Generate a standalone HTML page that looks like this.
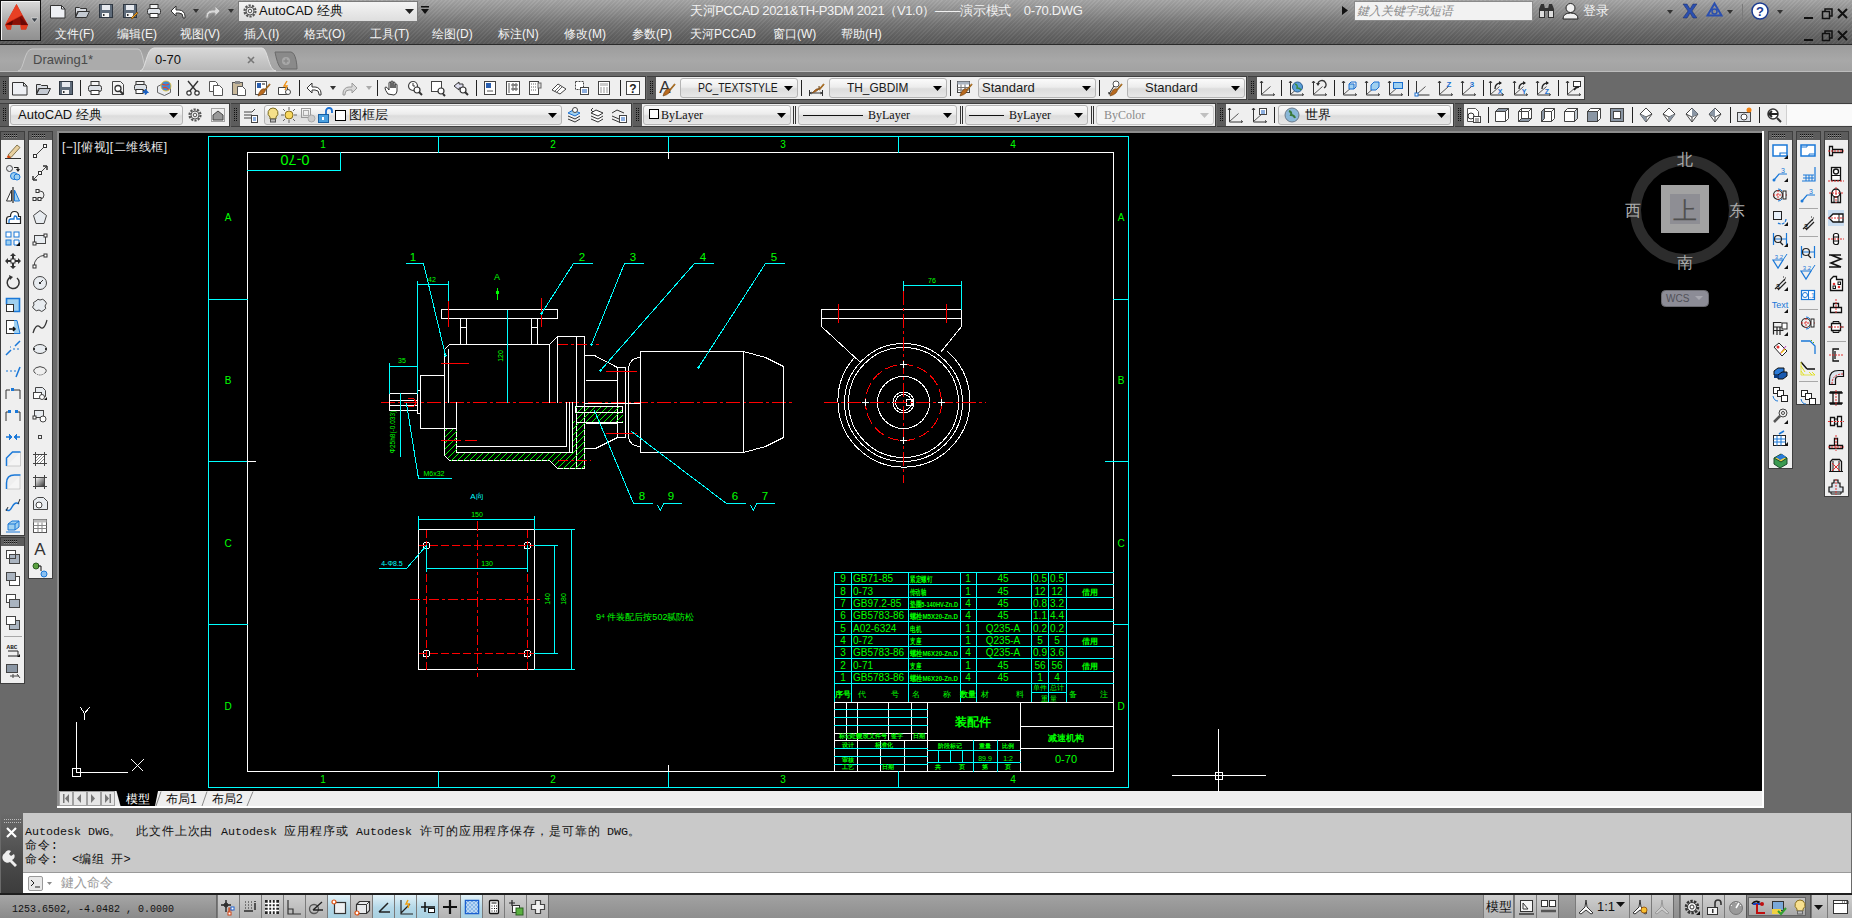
<!DOCTYPE html><html><head><meta charset="utf-8"><style>
*{margin:0;padding:0;box-sizing:border-box}
html,body{width:1852px;height:918px;overflow:hidden;background:#6a6a6a;font-family:"Liberation Sans",sans-serif;}
.a{position:absolute}
svg{position:absolute;overflow:visible}
.t{position:absolute;white-space:nowrap}
</style></head><body>
<div class="a" style="left:0;top:0;width:1852px;height:44px;background:linear-gradient(#a6a6a6 0px,#8e8e8e 12px,#747474 24px,#626262 36px,#595959 44px)"></div>
<div class="a" style="left:0;top:0;width:1852px;height:44px;background:repeating-linear-gradient(135deg,rgba(255,255,255,0.05) 0px,rgba(255,255,255,0.05) 1px,rgba(0,0,0,0.03) 1.5px,rgba(0,0,0,0.03) 3px)"></div>
<div class="a" style="left:0;top:44px;width:1852px;height:1px;background:#2a2a2a"></div>
<div class="a" style="left:0;top:0;width:41px;height:41px;background:linear-gradient(#dadada,#a4a4a4 60%,#909090);border:1px solid #111;box-shadow:inset 1px 1px 0 #f4f4f4"></div>
<svg style="left:0;top:0" width="41" height="41" viewBox="0 0 41 41"><path d="M16.5,4 L28,25 L26,29.5 L21,29.5 L20.5,25 L11.5,25 L11,29.5 L7,29.5 L5,25 Z" fill="#d42a14"/><path d="M16.5,4 L22,15 L6,23 Z" fill="#e84024"/><path d="M5.5,24.5 L22,15.5 L28,25 Z" fill="#8a1008"/><path d="M5.5,24.5 L13,20.5 L12,25 Z" fill="#5a0604"/><path d="M20,17 L28,25 L21,25z" fill="#6a0806"/><path d="M7,25.5h4.5l-0.5,4h-3.5z M20.5,25.5h7l-1.5,4h-5z" fill="#e03a1c"/><path d="M31,18h7l-3.5,4.5z" fill="#3a4048" stroke="#e8e8e8" stroke-width=".6"/></svg>
<svg style="left:50px;top:3px" width="16" height="16" viewBox="0 0 16 16"><path d="M0.5,2.5h11l3.5,3.5v9h-14.5z" fill="#eef0f4" stroke="#333" stroke-linejoin="round"/><path d="M11.5,2.5v3.5h3.5" fill="none" stroke="#333"/></svg>
<svg style="left:74px;top:3px" width="16" height="16" viewBox="0 0 16 16"><path d="M1.5,4.5h4l1,1h6v3h-9l-2,6z" fill="#d8dce2" stroke="#333"/><path d="M1.5,14.5l3-6h11l-3,6z" fill="#c4cad2" stroke="#333"/></svg>
<svg style="left:98px;top:3px" width="16" height="16" viewBox="0 0 16 16"><rect x="1.5" y="1.5" width="13" height="13" fill="#5e6b7a" stroke="#2e3640"/><rect x="4" y="2" width="8" height="5" fill="#e6e9ee"/><rect x="4" y="10" width="7" height="4" fill="#f4f4f4"/><rect x="5" y="11" width="1.5" height="2" fill="#333"/></svg>
<svg style="left:122px;top:3px" width="16" height="16" viewBox="0 0 16 16"><rect x="1.5" y="1.5" width="13" height="13" fill="#5e6b7a" stroke="#2e3640"/><rect x="4" y="2" width="8" height="5" fill="#e6e9ee"/><rect x="4" y="10" width="7" height="4" fill="#f4f4f4"/><rect x="5" y="11" width="1.5" height="2" fill="#333"/><path d="M9,15l6-6 1,1-6,6z" fill="#f0a020" stroke="#6a3a00" stroke-width=".6"/></svg>
<svg style="left:146px;top:3px" width="16" height="16" viewBox="0 0 16 16"><rect x="4" y="1.5" width="8" height="4" fill="#f4f4f4" stroke="#333"/><rect x="1.5" y="5.5" width="13" height="6" rx="2" fill="#dde1e6" stroke="#333"/><rect x="4" y="10.5" width="8" height="4" fill="#fff" stroke="#333"/></svg>
<svg style="left:170px;top:3px" width="16" height="16" viewBox="0 0 16 16"><path d="M6,3l-5,5 5,5v-3h3a4,4 0 0 1 4,4v1h2v-2a6,6 0 0 0 -6,-6h-3z" fill="#fff" stroke="#333"/></svg>
<svg style="left:205px;top:3px" width="16" height="16" viewBox="0 0 16 16"><path d="M10,3l5,5-5,5v-3h-3a4,4 0 0 0 -4,4v1h-2v-2a6,6 0 0 1 6,-6h3z" fill="#d8d8d8" stroke="#9a9a9a"/></svg>
<svg style="left:193px;top:9px" width="6" height="4"><path d="M0,0h6l-3,4z" fill="#333"/></svg>
<svg style="left:228px;top:9px" width="6" height="4"><path d="M0,0h6l-3,4z" fill="#333"/></svg>
<div class="a" style="left:238px;top:1px;width:180px;height:21px;background:linear-gradient(#f4f4f4,#dedede);border:1px solid #7a7a7a"></div>
<svg style="left:242px;top:3px" width="16" height="16" viewBox="0 0 16 16"><circle cx="8" cy="8" r="5.5" fill="none" stroke="#555" stroke-width="2.2" stroke-dasharray="2.2,1.2"/><circle cx="8" cy="8" r="4" fill="#eee" stroke="#555"/><circle cx="8" cy="8" r="1.8" fill="none" stroke="#555"/></svg>
<div class="t" style="left:259px;top:3px;font-size:13px;color:#111;line-height:16px">AutoCAD 经典</div>
<svg style="left:405px;top:9px" width="9" height="5"><path d="M0,0h9l-4.5,5z" fill="#222"/></svg>
<svg style="left:421px;top:6px" width="8" height="9"><path d="M0,0h8v1.5h-8zM0,3h8l-4,5z" fill="#111"/></svg>
<div class="t" style="left:690px;top:3px;font-size:13px;color:#f2f2f2;line-height:16px;letter-spacing:-0.35px">天河PCCAD 2021&amp;TH-P3DM 2021（V1.0）——演示模式&nbsp;&nbsp;&nbsp;&nbsp;0-70.DWG</div>
<svg style="left:1342px;top:6px" width="6" height="9"><path d="M0,0l6,4.5-6,4.5z" fill="#111"/></svg>
<div class="a" style="left:1354px;top:1px;width:179px;height:20px;background:#f2f2f2;border:1px solid #8a8a8a"></div>
<div class="t" style="left:1357px;top:3px;font-size:12px;color:#8a8a8a;font-style:italic;line-height:16px">鍵入关键字或短语</div>
<svg style="left:1538px;top:3px" width="17" height="16" viewBox="0 0 17 16"><path d="M1,6l2-5h3l1,5v9h-6z M10,6l1-5h3l2,5v9h-6z" fill="#333"/><rect x="2" y="8" width="4" height="6" fill="#ddd"/><rect x="11" y="8" width="4" height="6" fill="#ddd"/><rect x="6" y="5" width="5" height="3" fill="#333"/></svg>
<svg style="left:1562px;top:2px" width="17" height="18" viewBox="0 0 17 18"><circle cx="8.5" cy="6" r="4.5" fill="#f0f0f0" stroke="#222"/><path d="M1,17q0-6 7.5-6t7.5,6z" fill="#f0f0f0" stroke="#222"/></svg>
<div class="t" style="left:1583px;top:3px;font-size:13px;color:#f2f2f2;line-height:16px">登录</div>
<svg style="left:1667px;top:10px" width="6" height="4"><path d="M0,0h6l-3,4z" fill="#333"/></svg>
<svg style="left:1727px;top:10px" width="6" height="4"><path d="M0,0h6l-3,4z" fill="#333"/></svg>
<svg style="left:1777px;top:10px" width="6" height="4"><path d="M0,0h6l-3,4z" fill="#333"/></svg>
<svg style="left:1682px;top:3px" width="16" height="16" viewBox="0 0 16 16"><path d="M1,1h4l3,5 3-5h4l-5,7 5,7h-4l-3-5-3,5h-4l5-7z" fill="#2a4fb0" stroke="#1a2a60" stroke-width=".5"/></svg>
<svg style="left:1706px;top:2px" width="17" height="16" viewBox="0 0 17 16"><path d="M8.5,1.5l7,12h-14z" fill="none" stroke="#2a4fb0" stroke-width="2"/><circle cx="8.5" cy="9.5" r="2.5" fill="none" stroke="#2a4fb0" stroke-width="1.5"/></svg>
<div class="a" style="left:1742px;top:4px;width:1px;height:16px;background:#7a7a7a"></div>
<svg style="left:1751px;top:2px" width="18" height="18" viewBox="0 0 18 18"><circle cx="9" cy="9" r="8" fill="#fff" stroke="#1a3a90" stroke-width="1.5"/><text x="9" y="14" font-size="13" font-weight="bold" text-anchor="middle" fill="#1a3a90" font-family="Liberation Sans">?</text></svg>
<svg style="left:1803px;top:8px" width="46" height="12" viewBox="0 0 46 12"><rect x="1" y="9" width="9" height="2" fill="#111"/><rect x="19.5" y="3.5" width="7" height="7" fill="none" stroke="#111" stroke-width="1.5"/><path d="M22,3.5v-2.5h7v7h-2.5" fill="none" stroke="#111" stroke-width="1.5"/><path d="M35,1l9,9M44,1l-9,9" stroke="#111" stroke-width="2"/></svg>
<svg style="left:1803px;top:30px" width="46" height="12" viewBox="0 0 46 12"><rect x="1" y="9" width="9" height="2" fill="#111"/><rect x="19.5" y="3.5" width="7" height="7" fill="none" stroke="#111" stroke-width="1.5"/><path d="M22,3.5v-2.5h7v7h-2.5" fill="none" stroke="#111" stroke-width="1.5"/><path d="M35,1l9,9M44,1l-9,9" stroke="#111" stroke-width="2"/></svg>
<div class="t" style="left:55px;top:27px;font-size:12px;color:#f4f4f4;line-height:14px">文件(F)</div>
<div class="t" style="left:117px;top:27px;font-size:12px;color:#f4f4f4;line-height:14px">编辑(E)</div>
<div class="t" style="left:180px;top:27px;font-size:12px;color:#f4f4f4;line-height:14px">视图(V)</div>
<div class="t" style="left:244px;top:27px;font-size:12px;color:#f4f4f4;line-height:14px">插入(I)</div>
<div class="t" style="left:304px;top:27px;font-size:12px;color:#f4f4f4;line-height:14px">格式(O)</div>
<div class="t" style="left:370px;top:27px;font-size:12px;color:#f4f4f4;line-height:14px">工具(T)</div>
<div class="t" style="left:432px;top:27px;font-size:12px;color:#f4f4f4;line-height:14px">绘图(D)</div>
<div class="t" style="left:498px;top:27px;font-size:12px;color:#f4f4f4;line-height:14px">标注(N)</div>
<div class="t" style="left:564px;top:27px;font-size:12px;color:#f4f4f4;line-height:14px">修改(M)</div>
<div class="t" style="left:632px;top:27px;font-size:12px;color:#f4f4f4;line-height:14px">参数(P)</div>
<div class="t" style="left:690px;top:27px;font-size:12px;color:#f4f4f4;line-height:14px">天河PCCAD</div>
<div class="t" style="left:773px;top:27px;font-size:12px;color:#f4f4f4;line-height:14px">窗口(W)</div>
<div class="t" style="left:841px;top:27px;font-size:12px;color:#f4f4f4;line-height:14px">帮助(H)</div>
<div class="a" style="left:0;top:45px;width:1852px;height:27px;background:linear-gradient(#9c9c9c,#a8a8a8 60%,#a2a2a2);border-bottom:1px solid #bcbcbc"></div>
<div class="a" style="left:0;top:72px;width:1852px;height:4px;background:#6a6a6a"></div>
<svg style="left:0;top:45px" width="310" height="27" viewBox="0 0 310 27"><path d="M18,26 C24,26 24,4 32,4 L138,4 C144,4 142,26 150,26 Z" fill="#ababab" stroke="#c8c8c8"/><path d="M140,26 C146,26 146,3 154,3 L262,3 C268,3 268,26 276,26 Z" fill="url(#tabg)" stroke="#e0e0e0"/><defs><linearGradient id="tabg" x1="0" y1="0" x2="0" y2="1"><stop offset="0" stop-color="#d8d8d8"/><stop offset="1" stop-color="#b8b8b8"/></linearGradient></defs><path d="M275,7 L291,7 C296,8 297,20 297,24 L282,24 C278,22 276,12 275,7z" fill="#8a8a8a" stroke="#6a6a6a"/><circle cx="286" cy="16" r="4" fill="#a8a8a8"/><path d="M286,13.5v5M283.5,16h5" stroke="#8a8a8a" stroke-width="1.5"/><path d="M248,12l6,6M254,12l-6,6" stroke="#777" stroke-width="1.6"/></svg>
<div class="t" style="left:33px;top:52px;font-size:13px;color:#4a4a4a;line-height:16px">Drawing1*</div>
<div class="t" style="left:155px;top:52px;font-size:13px;color:#111;line-height:16px">0-70</div>
<div class="a" style="left:0px;top:76px;width:646px;height:24px;background:#efefef;border:1px solid #3e3e3e"></div>
<div class="a" style="left:0px;top:77px;width:9px;height:22px;background:#5c5c5c"></div>
<svg style="left:0px;top:77px" width="9" height="22" fill="#111"><rect x="3" y="4" width="1" height="1"/><rect x="3" y="6" width="1" height="1"/><rect x="3" y="8" width="1" height="1"/><rect x="3" y="10" width="1" height="1"/><rect x="3" y="12" width="1" height="1"/><rect x="3" y="14" width="1" height="1"/><rect x="3" y="16" width="1" height="1"/><rect x="5" y="4" width="1" height="1"/><rect x="5" y="6" width="1" height="1"/><rect x="5" y="8" width="1" height="1"/><rect x="5" y="10" width="1" height="1"/><rect x="5" y="12" width="1" height="1"/><rect x="5" y="14" width="1" height="1"/><rect x="5" y="16" width="1" height="1"/></svg>
<svg style="left:12px;top:80px" width="16" height="16" viewBox="0 0 16 16"><path d="M0.5,2.5h11l3.5,3.5v9h-14.5z" fill="#eef0f4" stroke="#333" stroke-linejoin="round"/><path d="M11.5,2.5v3.5h3.5" fill="none" stroke="#333"/></svg>
<svg style="left:35px;top:80px" width="16" height="16" viewBox="0 0 16 16"><path d="M1.5,4.5h4l1,1h6v3h-9l-2,6z" fill="#d8dce2" stroke="#333"/><path d="M1.5,14.5l3-6h11l-3,6z" fill="#c4cad2" stroke="#333"/></svg>
<svg style="left:58px;top:80px" width="16" height="16" viewBox="0 0 16 16"><rect x="1.5" y="1.5" width="13" height="13" fill="#5e6b7a" stroke="#2e3640"/><rect x="4" y="2" width="8" height="5" fill="#e6e9ee"/><rect x="4" y="10" width="7" height="4" fill="#f4f4f4"/><rect x="5" y="11" width="1.5" height="2" fill="#333"/></svg>
<svg style="left:87px;top:80px" width="16" height="16" viewBox="0 0 16 16"><rect x="4" y="1.5" width="8" height="4" fill="#f4f4f4" stroke="#333"/><rect x="1.5" y="5.5" width="13" height="6" rx="2" fill="#dde1e6" stroke="#333"/><rect x="4" y="10.5" width="8" height="4" fill="#fff" stroke="#333"/></svg>
<svg style="left:110px;top:80px" width="16" height="16" viewBox="0 0 16 16"><path d="M2.5,1.5h8l3,3v10h-11z" fill="#f4f4f4" stroke="#444"/><circle cx="8" cy="8.5" r="3" fill="#fff" stroke="#333" stroke-width="1.3"/><path d="M10,11l3.5,3.5" stroke="#333" stroke-width="2"/></svg>
<svg style="left:133px;top:80px" width="16" height="16" viewBox="0 0 16 16"><rect x="3" y="1.5" width="8" height="3" fill="#f4f4f4" stroke="#333"/><rect x="1.5" y="4.5" width="12" height="6" rx="2" fill="#dde1e6" stroke="#333"/><rect x="3" y="9.5" width="7" height="4" fill="#fff" stroke="#333"/><path d="M10,12h4l-2,-2.5M14,12l-2,2.5" stroke="#1a5fc0" stroke-width="2" fill="none"/></svg>
<svg style="left:156px;top:80px" width="16" height="16" viewBox="0 0 16 16"><path d="M1.5,6.5l6-3 7,3v6l-6,3-7-3z" fill="#e8eaee" stroke="#666"/><circle cx="10" cy="6" r="5" fill="#3a8ad8"/><path d="M6,4q4,2 7,0M7,8q3,-2 6,2" stroke="#f04020" stroke-width="1.2" fill="none"/><circle cx="10" cy="6" r="5" fill="none" stroke="#f0c020" stroke-width=".8"/></svg>
<svg style="left:185px;top:80px" width="16" height="16" viewBox="0 0 16 16"><path d="M3,1l9,11M13,1l-9,11" stroke="#333" stroke-width="1.4"/><circle cx="4" cy="13" r="2.2" fill="#fff" stroke="#333" stroke-width="1.2"/><circle cx="12" cy="13" r="2.2" fill="#fff" stroke="#333" stroke-width="1.2"/></svg>
<svg style="left:208px;top:80px" width="16" height="16" viewBox="0 0 16 16"><path d="M1.5,1.5h6l2,2v8h-8z" fill="#fff" stroke="#555"/><path d="M5.5,5.5h6l3,3v7h-9z" fill="#fff" stroke="#555"/></svg>
<svg style="left:231px;top:80px" width="16" height="16" viewBox="0 0 16 16"><rect x="1.5" y="2.5" width="10" height="12" fill="#c8b89a" stroke="#555"/><rect x="4" y="1" width="5" height="3" fill="#888"/><path d="M6.5,6.5h5l3,3v6h-8z" fill="#fff" stroke="#555"/></svg>
<svg style="left:254px;top:80px" width="16" height="16" viewBox="0 0 16 16"><rect x="1.5" y="1.5" width="11" height="13" fill="#fff" stroke="#555"/><rect x="3" y="3" width="4" height="5" fill="#2a5fb0"/><rect x="8" y="3" width="3" height="2" fill="#888"/><path d="M16,4l-5,6" stroke="#7a4a10" stroke-width="1.6"/><path d="M16,4l-5,6" stroke="#f0a030" stroke-width=".6"/><path d="M11,9q-2-1-4,1-2,2-3,6 4-1 6-3 2-2 1-4z" fill="#b86a20" stroke="#6a3a08" stroke-width=".6"/></svg>
<svg style="left:277px;top:80px" width="16" height="16" viewBox="0 0 16 16"><path d="M1.5,7.5h9v7h-9z" fill="#fff" stroke="#444"/><circle cx="11" cy="12" r="2.5" fill="#fff" stroke="#444"/><path d="M10,1l-3,5h3l-2,4" stroke="#f09010" stroke-width="1.4" fill="none"/></svg>
<svg style="left:306px;top:80px" width="16" height="16" viewBox="0 0 16 16"><path d="M6,3l-5,5 5,5v-3h3a4,4 0 0 1 4,4v1h2v-2a6,6 0 0 0 -6,-6h-3z" fill="#fff" stroke="#333"/></svg>
<svg style="left:342px;top:80px" width="16" height="16" viewBox="0 0 16 16"><path d="M10,3l5,5-5,5v-3h-3a4,4 0 0 0 -4,4v1h-2v-2a6,6 0 0 1 6,-6h3z" fill="#d8d8d8" stroke="#9a9a9a"/></svg>
<svg style="left:384px;top:80px" width="16" height="16" viewBox="0 0 16 16"><path d="M4,14q-3-4-3-6 0-1 1-1 1,0 3,3v-7q0-1 1-1 1,0 1,1v5v-6q0-1 1-1 1,0 1,1v6v-5q0-1 1-1 1,0 1,1v5v-3q0-1 1-1 1,0 1,1v6q0,3-3,4z" fill="#fff" stroke="#333"/></svg>
<svg style="left:407px;top:80px" width="16" height="16" viewBox="0 0 16 16"><circle cx="6" cy="6" r="4.5" fill="#fff" stroke="#444" stroke-width="1.2"/><path d="M6,3v3h2" stroke="#333" fill="none"/><circle cx="10" cy="10" r="3" fill="#fff" stroke="#333" stroke-width="1.2"/><path d="M12,12l3,3" stroke="#333" stroke-width="2"/></svg>
<svg style="left:430px;top:80px" width="16" height="16" viewBox="0 0 16 16"><rect x="1.5" y="1.5" width="10" height="10" fill="#fff" stroke="#444"/><circle cx="11" cy="11" r="3" fill="#fff" stroke="#333" stroke-width="1.2"/><path d="M13,14l2,2" stroke="#333" stroke-width="2"/></svg>
<svg style="left:453px;top:80px" width="16" height="16" viewBox="0 0 16 16"><path d="M6,2l-5,4 5,4v-2h4v-4h-4z" fill="#dde" stroke="#333"/><circle cx="10" cy="10" r="3" fill="#fff" stroke="#333" stroke-width="1.2"/><path d="M12,12l3,3" stroke="#333" stroke-width="2"/></svg>
<svg style="left:482px;top:80px" width="16" height="16" viewBox="0 0 16 16"><rect x="2.5" y="1.5" width="11" height="13" fill="#fff" stroke="#444"/><rect x="4" y="3" width="5" height="5" fill="#2a5fb0"/><path d="M5,11h6" stroke="#555"/></svg>
<svg style="left:505px;top:80px" width="16" height="16" viewBox="0 0 16 16"><rect x="1.5" y="1.5" width="13" height="13" fill="#fff" stroke="#444"/><path d="M4,3v10M7,4h2v2h-2zM10,4h2v2h-2zM7,8h2v2h-2zM10,8h2v2h-2z" stroke="#555" fill="none"/></svg>
<svg style="left:527px;top:80px" width="16" height="16" viewBox="0 0 16 16"><rect x="2.5" y="1.5" width="9" height="13" fill="#fff" stroke="#444"/><path d="M4,4h5M4,7h5M4,10h5" stroke="#666" stroke-dasharray="1,1"/><rect x="11" y="3" width="3" height="5" fill="#ddd" stroke="#666"/></svg>
<svg style="left:551px;top:80px" width="16" height="16" viewBox="0 0 16 16"><path d="M1,10l6-6 8,5-6,5z" fill="#fff" stroke="#444"/><path d="M3,12l6-6M5,13l6-6" stroke="#666"/></svg>
<svg style="left:574px;top:80px" width="16" height="16" viewBox="0 0 16 16"><rect x="1.5" y="1.5" width="8" height="8" fill="#fff" stroke="#444" stroke-dasharray="2,1"/><rect x="6.5" y="7.5" width="8" height="7" fill="#fff" stroke="#444"/><path d="M8,10h5M8,12h5" stroke="#1a5fc0"/></svg>
<svg style="left:596px;top:80px" width="16" height="16" viewBox="0 0 16 16"><rect x="2.5" y="1.5" width="11" height="13" fill="#fff" stroke="#444"/><rect x="4" y="3" width="8" height="3" fill="#ccc"/><path d="M4.5,8h1M7.5,8h1M10.5,8h1M4.5,10h1M7.5,10h1M10.5,10h1M4.5,12h1M7.5,12h1M10.5,12h1" stroke="#333"/></svg>
<svg style="left:625px;top:80px" width="16" height="16" viewBox="0 0 16 16"><rect x="1.5" y="1.5" width="13" height="13" fill="#fff" stroke="#444"/><text x="8" y="13" font-size="12" font-weight="bold" text-anchor="middle" font-family="Liberation Sans" fill="#222">?</text></svg>
<div class="a" style="left:80px;top:80px;width:1px;height:16px;background:#222"></div>
<div class="a" style="left:178px;top:80px;width:1px;height:16px;background:#222"></div>
<div class="a" style="left:299px;top:80px;width:1px;height:16px;background:#222"></div>
<div class="a" style="left:377px;top:80px;width:1px;height:16px;background:#222"></div>
<div class="a" style="left:476px;top:80px;width:1px;height:16px;background:#222"></div>
<div class="a" style="left:620px;top:80px;width:1px;height:16px;background:#222"></div>
<svg style="left:330px;top:86px" width="6" height="4"><path d="M0,0h6l-3,4z" fill="#333"/></svg>
<svg style="left:366px;top:86px" width="6" height="4"><path d="M0,0h6l-3,4z" fill="#aaa"/></svg>
<div class="a" style="left:647px;top:76px;width:600px;height:24px;background:#efefef;border:1px solid #3e3e3e"></div>
<div class="a" style="left:647px;top:77px;width:9px;height:22px;background:#5c5c5c"></div>
<svg style="left:647px;top:77px" width="9" height="22" fill="#111"><rect x="3" y="4" width="1" height="1"/><rect x="3" y="6" width="1" height="1"/><rect x="3" y="8" width="1" height="1"/><rect x="3" y="10" width="1" height="1"/><rect x="3" y="12" width="1" height="1"/><rect x="3" y="14" width="1" height="1"/><rect x="3" y="16" width="1" height="1"/><rect x="5" y="4" width="1" height="1"/><rect x="5" y="6" width="1" height="1"/><rect x="5" y="8" width="1" height="1"/><rect x="5" y="10" width="1" height="1"/><rect x="5" y="12" width="1" height="1"/><rect x="5" y="14" width="1" height="1"/><rect x="5" y="16" width="1" height="1"/></svg>
<svg style="left:659px;top:80px" width="16" height="16" viewBox="0 0 16 16"><text x="6" y="13" font-size="17" font-family="Liberation Sans" fill="#333" text-anchor="middle">A</text><path d="M16,4l-5,6" stroke="#7a4a10" stroke-width="1.6"/><path d="M16,4l-5,6" stroke="#f0a030" stroke-width=".6"/><path d="M11,9q-2-1-4,1-2,2-3,6 4-1 6-3 2-2 1-4z" fill="#b86a20" stroke="#6a3a08" stroke-width=".6"/></svg>
<div class="a" style="left:680px;top:78px;width:118px;height:20px;background:linear-gradient(#fbfbfb,#ececec 45%,#dcdcdc 55%,#e8e8e8);border:1px solid #b4b4b4;border-radius:3px;overflow:hidden"></div>
<div class="t" style="left:698px;top:80px;font-size:13px;color:#1a1a1a;line-height:16px;transform:scaleX(0.80);transform-origin:0 0">PC_TEXTSTYLE</div>
<svg style="left:784px;top:86px" width="9" height="5"><path d="M0,0h9l-4.5,5z" fill="#000"/></svg>
<div class="a" style="left:801px;top:80px;width:1px;height:16px;background:#222"></div>
<svg style="left:808px;top:80px" width="16" height="16" viewBox="0 0 16 16"><path d="M1.5,10v6M14.5,10v6M1.5,13h13" stroke="#333" fill="none"/><path d="M1.5,13l2-1.5v3zM14.5,13l-2-1.5v3z" fill="#333"/><path d="M16,4l-5,6" stroke="#7a4a10" stroke-width="1.6"/><path d="M16,4l-5,6" stroke="#f0a030" stroke-width=".6"/><path d="M11,9q-2-1-4,1-2,2-3,3 4-1 6-3 2-2 1-4z" fill="#b86a20" stroke="#6a3a08" stroke-width=".6"/></svg>
<div class="a" style="left:829px;top:78px;width:118px;height:20px;background:linear-gradient(#fbfbfb,#ececec 45%,#dcdcdc 55%,#e8e8e8);border:1px solid #b4b4b4;border-radius:3px;overflow:hidden"></div>
<div class="t" style="left:847px;top:80px;font-size:13px;color:#1a1a1a;line-height:16px;transform:scaleX(0.915);transform-origin:0 0">TH_GBDIM</div>
<svg style="left:933px;top:86px" width="9" height="5"><path d="M0,0h9l-4.5,5z" fill="#000"/></svg>
<div class="a" style="left:950px;top:80px;width:1px;height:16px;background:#222"></div>
<svg style="left:956px;top:80px" width="16" height="16" viewBox="0 0 16 16"><rect x="1.5" y="1.5" width="12" height="11" fill="#fff" stroke="#444"/><rect x="1.5" y="1.5" width="12" height="3" fill="#aab4c0"/><path d="M1.5,7.5h12M1.5,10h12M5,4.5v8M9,4.5v8" stroke="#777"/><path d="M16,4l-5,6" stroke="#7a4a10" stroke-width="1.6"/><path d="M16,4l-5,6" stroke="#f0a030" stroke-width=".6"/><path d="M11,9q-2-1-4,1-2,2-3,6 4-1 6-3 2-2 1-4z" fill="#b86a20" stroke="#6a3a08" stroke-width=".6"/></svg>
<div class="a" style="left:978px;top:78px;width:118px;height:20px;background:linear-gradient(#fbfbfb,#ececec 45%,#dcdcdc 55%,#e8e8e8);border:1px solid #b4b4b4;border-radius:3px;overflow:hidden"></div>
<div class="t" style="left:982px;top:80px;font-size:13px;color:#1a1a1a;line-height:16px">Standard</div>
<svg style="left:1082px;top:86px" width="9" height="5"><path d="M0,0h9l-4.5,5z" fill="#000"/></svg>
<div class="a" style="left:1099px;top:80px;width:1px;height:16px;background:#222"></div>
<svg style="left:1106px;top:80px" width="16" height="16" viewBox="0 0 16 16"><circle cx="10" cy="4" r="3" fill="#fff" stroke="#555"/><path d="M3,14l5-8" stroke="#333"/><path d="M2,12l1,3 2-2z" fill="#333"/><path d="M16,4l-5,6" stroke="#7a4a10" stroke-width="1.6"/><path d="M16,4l-5,6" stroke="#f0a030" stroke-width=".6"/><path d="M11,9q-2-1-4,1-2,2-3,6 4-1 6-3 2-2 1-4z" fill="#b86a20" stroke="#6a3a08" stroke-width=".6"/></svg>
<div class="a" style="left:1127px;top:78px;width:118px;height:20px;background:linear-gradient(#fbfbfb,#ececec 45%,#dcdcdc 55%,#e8e8e8);border:1px solid #b4b4b4;border-radius:3px;overflow:hidden"></div>
<div class="t" style="left:1145px;top:80px;font-size:13px;color:#1a1a1a;line-height:16px">Standard</div>
<svg style="left:1231px;top:86px" width="9" height="5"><path d="M0,0h9l-4.5,5z" fill="#000"/></svg>
<div class="a" style="left:1248px;top:76px;width:337px;height:24px;background:#efefef;border:1px solid #3e3e3e"></div>
<div class="a" style="left:1248px;top:77px;width:9px;height:22px;background:#5c5c5c"></div>
<svg style="left:1248px;top:77px" width="9" height="22" fill="#111"><rect x="3" y="4" width="1" height="1"/><rect x="3" y="6" width="1" height="1"/><rect x="3" y="8" width="1" height="1"/><rect x="3" y="10" width="1" height="1"/><rect x="3" y="12" width="1" height="1"/><rect x="3" y="14" width="1" height="1"/><rect x="3" y="16" width="1" height="1"/><rect x="5" y="4" width="1" height="1"/><rect x="5" y="6" width="1" height="1"/><rect x="5" y="8" width="1" height="1"/><rect x="5" y="10" width="1" height="1"/><rect x="5" y="12" width="1" height="1"/><rect x="5" y="14" width="1" height="1"/><rect x="5" y="16" width="1" height="1"/></svg>
<svg style="left:1259px;top:80px" width="16" height="16" viewBox="0 0 16 16"><path d="M2.5,1v14h13" fill="none" stroke="#333"/><path d="M2.5,14.5l9-8" stroke="#555"/><path d="M1,3l1.5-2 1.5,2M14,13.5l1.5,1-1.5,1" fill="none" stroke="#333"/></svg>
<svg style="left:1288px;top:80px" width="16" height="16" viewBox="0 0 16 16"><path d="M2.5,1v14h13" fill="none" stroke="#333"/><path d="M2.5,14.5l9-8" stroke="#555"/><path d="M1,3l1.5-2 1.5,2M14,13.5l1.5,1-1.5,1" fill="none" stroke="#333"/><circle cx="9.5" cy="7" r="5" fill="#5aa0d8" stroke="#2a5a90"/><path d="M7,4q3,1 2,4 3,0 4,2" stroke="#3a8a40" stroke-width="1.5" fill="none"/></svg>
<svg style="left:1311px;top:80px" width="16" height="16" viewBox="0 0 16 16"><path d="M2.5,1v14h13" fill="none" stroke="#333"/><path d="M2.5,14.5l9-8" stroke="#555"/><path d="M1,3l1.5-2 1.5,2M14,13.5l1.5,1-1.5,1" fill="none" stroke="#333"/><path d="M13,8a4,4 0 1 0 -6,-3" fill="none" stroke="#333" stroke-width="1.3"/><path d="M5,3l2,3 2-3z" fill="#333"/></svg>
<svg style="left:1341px;top:80px" width="16" height="16" viewBox="0 0 16 16"><path d="M2.5,1v14h13" fill="none" stroke="#333"/><path d="M2.5,14.5l9-8" stroke="#555"/><path d="M1,3l1.5-2 1.5,2M14,13.5l1.5,1-1.5,1" fill="none" stroke="#333"/><path d="M8,4h5v5h-5z" fill="#9fd0f0" stroke="#1a6fd0"/><path d="M8,4l2-2h5v5l-2,2" fill="none" stroke="#1a6fd0"/></svg>
<svg style="left:1364px;top:80px" width="16" height="16" viewBox="0 0 16 16"><path d="M2.5,1v14h13" fill="none" stroke="#333"/><path d="M2.5,14.5l9-8" stroke="#555"/><path d="M1,3l1.5-2 1.5,2M14,13.5l1.5,1-1.5,1" fill="none" stroke="#333"/><path d="M7,5l3-3h5v5l-3,3h-5z" fill="#9fd0f0" stroke="#1a6fd0"/></svg>
<svg style="left:1387px;top:80px" width="16" height="16" viewBox="0 0 16 16"><path d="M2.5,1v14h13" fill="none" stroke="#333"/><path d="M2.5,14.5l9-8" stroke="#555"/><path d="M1,3l1.5-2 1.5,2M14,13.5l1.5,1-1.5,1" fill="none" stroke="#333"/><rect x="6.5" y="2.5" width="9" height="6" fill="#9fd0f0" stroke="#1a6fd0"/></svg>
<svg style="left:1414px;top:80px" width="16" height="16" viewBox="0 0 16 16"><path d="M2.5,1v14h13" fill="none" stroke="#333"/><path d="M2.5,14.5l9-8" stroke="#555"/><rect x="1" y="13" width="3" height="3" fill="#fff" stroke="#1a6fd0"/></svg>
<svg style="left:1437px;top:80px" width="16" height="16" viewBox="0 0 16 16"><path d="M2.5,1v14h13" fill="none" stroke="#333"/><path d="M2.5,14.5l9-8" stroke="#555"/><path d="M1,3l1.5-2 1.5,2M14,13.5l1.5,1-1.5,1" fill="none" stroke="#333"/><text x="12" y="7" font-size="8" font-weight="bold" fill="#1a6fd0" font-family="Liberation Sans" text-anchor="middle">Z</text></svg>
<svg style="left:1460px;top:80px" width="16" height="16" viewBox="0 0 16 16"><path d="M2.5,1v14h13" fill="none" stroke="#333"/><path d="M2.5,14.5l9-8" stroke="#555"/><path d="M1,3l1.5-2 1.5,2M14,13.5l1.5,1-1.5,1" fill="none" stroke="#333"/><text x="12" y="7" font-size="8" font-weight="bold" fill="#1a6fd0" font-family="Liberation Sans" text-anchor="middle">3</text></svg>
<svg style="left:1488px;top:80px" width="16" height="16" viewBox="0 0 16 16"><path d="M2.5,1v14h13" fill="none" stroke="#333"/><path d="M2.5,14.5l9-8" stroke="#555"/><path d="M1,3l1.5-2 1.5,2M14,13.5l1.5,1-1.5,1" fill="none" stroke="#333"/><path d="M7,9q0-6 6-6" fill="none" stroke="#222" stroke-width="1.3"/><path d="M11,1l3,2-3,2z" fill="#222"/><text x="12" y="14" font-size="7" font-weight="bold" fill="#1a6fd0" font-family="Liberation Sans" text-anchor="middle">X</text></svg>
<svg style="left:1512px;top:80px" width="16" height="16" viewBox="0 0 16 16"><path d="M2.5,1v14h13" fill="none" stroke="#333"/><path d="M2.5,14.5l9-8" stroke="#555"/><path d="M1,3l1.5-2 1.5,2M14,13.5l1.5,1-1.5,1" fill="none" stroke="#333"/><path d="M7,9q0-6 6-6" fill="none" stroke="#222" stroke-width="1.3"/><path d="M11,1l3,2-3,2z" fill="#222"/><text x="12" y="14" font-size="7" font-weight="bold" fill="#1a6fd0" font-family="Liberation Sans" text-anchor="middle">Y</text></svg>
<svg style="left:1535px;top:80px" width="16" height="16" viewBox="0 0 16 16"><path d="M2.5,1v14h13" fill="none" stroke="#333"/><path d="M2.5,14.5l9-8" stroke="#555"/><path d="M1,3l1.5-2 1.5,2M14,13.5l1.5,1-1.5,1" fill="none" stroke="#333"/><path d="M7,9q0-6 6-6" fill="none" stroke="#222" stroke-width="1.3"/><path d="M11,1l3,2-3,2z" fill="#222"/><text x="12" y="14" font-size="7" font-weight="bold" fill="#1a6fd0" font-family="Liberation Sans" text-anchor="middle">Z</text></svg>
<svg style="left:1565px;top:80px" width="16" height="16" viewBox="0 0 16 16"><path d="M2.5,1v14h13" fill="none" stroke="#333"/><path d="M2.5,14.5l9-8" stroke="#555"/><path d="M1,3l1.5-2 1.5,2M14,13.5l1.5,1-1.5,1" fill="none" stroke="#333"/><rect x="8.5" y="1.5" width="7" height="5" fill="#fff" stroke="#333"/><path d="M9,10q2-3 5-3" fill="none" stroke="#222" stroke-width="1.5"/></svg>
<div class="a" style="left:1281px;top:80px;width:1px;height:16px;background:#222"></div>
<div class="a" style="left:1334px;top:80px;width:1px;height:16px;background:#222"></div>
<div class="a" style="left:1408px;top:80px;width:1px;height:16px;background:#222"></div>
<div class="a" style="left:1483px;top:80px;width:1px;height:16px;background:#222"></div>
<div class="a" style="left:1558px;top:80px;width:1px;height:16px;background:#222"></div>
<div class="a" style="left:0px;top:103px;width:230px;height:24px;background:#efefef;border:1px solid #3e3e3e"></div>
<div class="a" style="left:0px;top:104px;width:9px;height:22px;background:#5c5c5c"></div>
<svg style="left:0px;top:104px" width="9" height="22" fill="#111"><rect x="3" y="4" width="1" height="1"/><rect x="3" y="6" width="1" height="1"/><rect x="3" y="8" width="1" height="1"/><rect x="3" y="10" width="1" height="1"/><rect x="3" y="12" width="1" height="1"/><rect x="3" y="14" width="1" height="1"/><rect x="3" y="16" width="1" height="1"/><rect x="5" y="4" width="1" height="1"/><rect x="5" y="6" width="1" height="1"/><rect x="5" y="8" width="1" height="1"/><rect x="5" y="10" width="1" height="1"/><rect x="5" y="12" width="1" height="1"/><rect x="5" y="14" width="1" height="1"/><rect x="5" y="16" width="1" height="1"/></svg>
<div class="a" style="left:10px;top:105px;width:173px;height:20px;background:linear-gradient(#fbfbfb,#ececec 45%,#dcdcdc 55%,#e8e8e8);border:1px solid #b4b4b4;border-radius:3px;overflow:hidden"></div>
<div class="t" style="left:18px;top:107px;font-size:13px;color:#111;line-height:16px">AutoCAD 经典</div>
<svg style="left:169px;top:113px" width="9" height="5"><path d="M0,0h9l-4.5,5z" fill="#000"/></svg>
<svg style="left:187px;top:107px" width="16" height="16" viewBox="0 0 16 16"><circle cx="8" cy="8" r="5.5" fill="none" stroke="#555" stroke-width="2.2" stroke-dasharray="2.2,1.2"/><circle cx="8" cy="8" r="4" fill="#eee" stroke="#555"/><circle cx="8" cy="8" r="1.8" fill="none" stroke="#555"/></svg>
<svg style="left:210px;top:107px" width="16" height="16" viewBox="0 0 16 16"><rect x="1.5" y="1.5" width="13" height="13" fill="none" stroke="#555" stroke-dasharray="1,1"/><path d="M3,8l5-4 5,4v5h-10z" fill="#999" stroke="#444"/></svg>
<div class="a" style="left:231px;top:103px;width:401px;height:24px;background:#efefef;border:1px solid #3e3e3e"></div>
<div class="a" style="left:231px;top:104px;width:9px;height:22px;background:#5c5c5c"></div>
<svg style="left:231px;top:104px" width="9" height="22" fill="#111"><rect x="3" y="4" width="1" height="1"/><rect x="3" y="6" width="1" height="1"/><rect x="3" y="8" width="1" height="1"/><rect x="3" y="10" width="1" height="1"/><rect x="3" y="12" width="1" height="1"/><rect x="3" y="14" width="1" height="1"/><rect x="3" y="16" width="1" height="1"/><rect x="5" y="4" width="1" height="1"/><rect x="5" y="6" width="1" height="1"/><rect x="5" y="8" width="1" height="1"/><rect x="5" y="10" width="1" height="1"/><rect x="5" y="12" width="1" height="1"/><rect x="5" y="14" width="1" height="1"/><rect x="5" y="16" width="1" height="1"/></svg>
<svg style="left:243px;top:107px" width="16" height="16" viewBox="0 0 16 16"><path d="M1,5h8l3-3M1,8h8M1,11h8" stroke="#444" fill="none"/><rect x="8.5" y="8.5" width="6" height="7" fill="#fff" stroke="#444"/><path d="M10,11h3M10,13h3" stroke="#1a5fc0"/></svg>
<div class="a" style="left:264px;top:105px;width:298px;height:20px;background:linear-gradient(#fbfbfb,#ececec 45%,#dcdcdc 55%,#e8e8e8);border:1px solid #b4b4b4;border-radius:3px;overflow:hidden"></div>
<div class="t" style="left:349px;top:107px;font-size:13px;color:#111;line-height:16px">图框层</div>
<svg style="left:548px;top:113px" width="9" height="5"><path d="M0,0h9l-4.5,5z" fill="#000"/></svg>
<svg style="left:265px;top:107px" width="16" height="16" viewBox="0 0 16 16"><path d="M8,1a5,5 0 0 1 3,9v2h-6v-2a5,5 0 0 1 3,-9z" fill="#f6e08a" stroke="#7a6a20"/><rect x="5.5" y="12" width="5" height="3" fill="#bbb" stroke="#555"/></svg>
<svg style="left:281px;top:107px" width="16" height="16" viewBox="0 0 16 16"><circle cx="8" cy="8" r="4" fill="#f8d860" stroke="#8a7020"/><path d="M8,0v3M8,13v3M0,8h3M13,8h3M2,2l2,2M12,12l2,2M2,14l2-2M12,4l2-2" stroke="#666"/></svg>
<svg style="left:300px;top:107px" width="16" height="16" viewBox="0 0 16 16"><rect x="1.5" y="1.5" width="9" height="9" fill="none" stroke="#999"/><rect x="3.5" y="3.5" width="5" height="5" fill="none" stroke="#aaa"/><circle cx="11.5" cy="11.5" r="3.5" fill="#ccc" stroke="#aaa"/></svg>
<svg style="left:317px;top:107px" width="16" height="16" viewBox="0 0 16 16"><path d="M9,7v-3a3,3 0 0 1 6,0v2" fill="none" stroke="#1a6fd0" stroke-width="1.8"/><rect x="1.5" y="7.5" width="10" height="8" fill="#4aa0e0" stroke="#1a5fa0"/><rect x="5" y="10" width="2" height="3" fill="#fff"/></svg>
<svg style="left:333px;top:107px" width="14" height="16" viewBox="0 0 14 16"><rect x="2.5" y="3.5" width="10" height="10" fill="#fff" stroke="#000"/></svg>
<svg style="left:566px;top:107px" width="16" height="16" viewBox="0 0 16 16"><path d="M2,6l5-3 7,3-5,3z" fill="#9fd0f0" stroke="#1a6fd0"/><path d="M2,9l7,3 5-3M2,12l7,3 5-3" fill="none" stroke="#333"/><circle cx="9" cy="3" r="2.5" fill="#fff" stroke="#444"/></svg>
<svg style="left:589px;top:107px" width="16" height="16" viewBox="0 0 16 16"><path d="M2,6l5-3 7,3-5,3z M2,9l7,3 5-3 M2,12l7,3 5-3" fill="#fff" stroke="#333"/><path d="M4,1l-2,2 2,2" stroke="#333" fill="none"/></svg>
<svg style="left:611px;top:107px" width="16" height="16" viewBox="0 0 16 16"><path d="M1,6l5-3 7,3M1,9l7,3M1,12l7,3" fill="none" stroke="#333"/><rect x="8.5" y="8.5" width="7" height="7" fill="#fff" stroke="#444"/><path d="M10,11h4M10,13h4" stroke="#1a5fc0"/></svg>
<div class="a" style="left:633px;top:103px;width:583px;height:24px;background:#efefef;border:1px solid #3e3e3e"></div>
<div class="a" style="left:633px;top:104px;width:9px;height:22px;background:#5c5c5c"></div>
<svg style="left:633px;top:104px" width="9" height="22" fill="#111"><rect x="3" y="4" width="1" height="1"/><rect x="3" y="6" width="1" height="1"/><rect x="3" y="8" width="1" height="1"/><rect x="3" y="10" width="1" height="1"/><rect x="3" y="12" width="1" height="1"/><rect x="3" y="14" width="1" height="1"/><rect x="3" y="16" width="1" height="1"/><rect x="5" y="4" width="1" height="1"/><rect x="5" y="6" width="1" height="1"/><rect x="5" y="8" width="1" height="1"/><rect x="5" y="10" width="1" height="1"/><rect x="5" y="12" width="1" height="1"/><rect x="5" y="14" width="1" height="1"/><rect x="5" y="16" width="1" height="1"/></svg>
<div class="a" style="left:643px;top:105px;width:148px;height:20px;background:linear-gradient(#fbfbfb,#ececec 45%,#dcdcdc 55%,#e8e8e8);border:1px solid #b4b4b4;border-radius:3px;overflow:hidden"></div>
<div class="t" style="left:661px;top:107px;font-family:'Liberation Serif',serif;font-size:12px;color:#111;line-height:16px">ByLayer</div>
<svg style="left:777px;top:113px" width="9" height="5"><path d="M0,0h9l-4.5,5z" fill="#000"/></svg>
<div class="a" style="left:649px;top:109px;width:10px;height:10px;background:#fff;border:1px solid #000"></div>
<div class="a" style="left:793px;top:106px;width:1px;height:18px;background:#333"></div>
<div class="a" style="left:795px;top:106px;width:1px;height:18px;background:#333"></div>
<div class="a" style="left:798px;top:105px;width:159px;height:20px;background:linear-gradient(#fbfbfb,#ececec 45%,#dcdcdc 55%,#e8e8e8);border:1px solid #b4b4b4;border-radius:3px;overflow:hidden"></div>
<div class="t" style="left:868px;top:107px;font-family:'Liberation Serif',serif;font-size:12px;color:#111;line-height:16px">ByLayer</div>
<svg style="left:943px;top:113px" width="9" height="5"><path d="M0,0h9l-4.5,5z" fill="#000"/></svg>
<div class="a" style="left:803px;top:115px;width:60px;height:1px;background:#111"></div>
<div class="a" style="left:960px;top:106px;width:1px;height:18px;background:#333"></div>
<div class="a" style="left:962px;top:106px;width:1px;height:18px;background:#333"></div>
<div class="a" style="left:965px;top:105px;width:123px;height:20px;background:linear-gradient(#fbfbfb,#ececec 45%,#dcdcdc 55%,#e8e8e8);border:1px solid #b4b4b4;border-radius:3px;overflow:hidden"></div>
<div class="t" style="left:1009px;top:107px;font-family:'Liberation Serif',serif;font-size:12px;color:#111;line-height:16px">ByLayer</div>
<svg style="left:1074px;top:113px" width="9" height="5"><path d="M0,0h9l-4.5,5z" fill="#000"/></svg>
<div class="a" style="left:969px;top:115px;width:35px;height:1px;background:#111"></div>
<div class="a" style="left:1091px;top:106px;width:1px;height:18px;background:#333"></div>
<div class="a" style="left:1093px;top:106px;width:1px;height:18px;background:#333"></div>
<div class="a" style="left:1096px;top:105px;width:118px;height:20px;background:#f4f4f4;border:1px solid #c8c8c8;border-radius:3px"></div>
<div class="t" style="left:1104px;top:107px;font-family:'Liberation Serif',serif;font-size:12px;color:#8a8a8a;line-height:16px">ByColor</div>
<svg style="left:1200px;top:113px" width="9" height="5"><path d="M0,0h9l-4.5,5z" fill="#c0c0c0"/></svg>
<div class="a" style="left:1217px;top:103px;width:237px;height:24px;background:#efefef;border:1px solid #3e3e3e"></div>
<div class="a" style="left:1217px;top:104px;width:9px;height:22px;background:#5c5c5c"></div>
<svg style="left:1217px;top:104px" width="9" height="22" fill="#111"><rect x="3" y="4" width="1" height="1"/><rect x="3" y="6" width="1" height="1"/><rect x="3" y="8" width="1" height="1"/><rect x="3" y="10" width="1" height="1"/><rect x="3" y="12" width="1" height="1"/><rect x="3" y="14" width="1" height="1"/><rect x="3" y="16" width="1" height="1"/><rect x="5" y="4" width="1" height="1"/><rect x="5" y="6" width="1" height="1"/><rect x="5" y="8" width="1" height="1"/><rect x="5" y="10" width="1" height="1"/><rect x="5" y="12" width="1" height="1"/><rect x="5" y="14" width="1" height="1"/><rect x="5" y="16" width="1" height="1"/></svg>
<svg style="left:1227px;top:107px" width="16" height="16" viewBox="0 0 16 16"><path d="M2.5,1v14h13" fill="none" stroke="#333"/><path d="M2.5,14.5l9-8" stroke="#555"/><path d="M1,3l1.5-2 1.5,2M14,13.5l1.5,1-1.5,1" fill="none" stroke="#333"/></svg>
<svg style="left:1251px;top:107px" width="16" height="16" viewBox="0 0 16 16"><path d="M2.5,1v14h13" fill="none" stroke="#333"/><path d="M2.5,14.5l9-8" stroke="#555"/><path d="M1,3l1.5-2 1.5,2M14,13.5l1.5,1-1.5,1" fill="none" stroke="#333"/><rect x="8.5" y="1.5" width="7" height="6" fill="#fff" stroke="#444"/><path d="M10,4h4M10,6h4" stroke="#1a5fc0"/></svg>
<div class="a" style="left:1274px;top:107px;width:1px;height:16px;background:#222"></div>
<div class="a" style="left:1278px;top:105px;width:173px;height:20px;background:linear-gradient(#fbfbfb,#ececec 45%,#dcdcdc 55%,#e8e8e8);border:1px solid #b4b4b4;border-radius:3px;overflow:hidden"></div>
<div class="t" style="left:1305px;top:107px;font-size:13px;color:#111;line-height:16px">世界</div>
<svg style="left:1437px;top:113px" width="9" height="5"><path d="M0,0h9l-4.5,5z" fill="#000"/></svg>
<svg style="left:1284px;top:107px" width="16" height="16" viewBox="0 0 16 16"><circle cx="8" cy="8" r="7" fill="#8ab8d8" stroke="#6a7a8a"/><path d="M5,4q3,1 2,4 3,0 4,3" stroke="#3a7a3a" stroke-width="2" fill="none"/></svg>
<div class="a" style="left:1455px;top:103px;width:400px;height:24px;background:#efefef;border:1px solid #3e3e3e"></div>
<div class="a" style="left:1455px;top:104px;width:9px;height:22px;background:#5c5c5c"></div>
<svg style="left:1455px;top:104px" width="9" height="22" fill="#111"><rect x="3" y="4" width="1" height="1"/><rect x="3" y="6" width="1" height="1"/><rect x="3" y="8" width="1" height="1"/><rect x="3" y="10" width="1" height="1"/><rect x="3" y="12" width="1" height="1"/><rect x="3" y="14" width="1" height="1"/><rect x="3" y="16" width="1" height="1"/><rect x="5" y="4" width="1" height="1"/><rect x="5" y="6" width="1" height="1"/><rect x="5" y="8" width="1" height="1"/><rect x="5" y="10" width="1" height="1"/><rect x="5" y="12" width="1" height="1"/><rect x="5" y="14" width="1" height="1"/><rect x="5" y="16" width="1" height="1"/></svg>
<svg style="left:1465px;top:107px" width="16" height="16" viewBox="0 0 16 16"><path d="M2.5,1.5h8l3,3v10h-11z" fill="#fff" stroke="#555"/><circle cx="6" cy="9" r="3" fill="none" stroke="#333"/><rect x="8.5" y="9.5" width="7" height="6" fill="#fff" stroke="#444"/><path d="M10,12h4M10,14h4" stroke="#555"/></svg>
<div class="a" style="left:1488px;top:107px;width:1px;height:16px;background:#222"></div>
<svg style="left:1494px;top:107px" width="16" height="16" viewBox="0 0 16 16"><path d="M1.5,4.5l3-3h10v10l-3,3h-10z" fill="#fff" stroke="#444"/><path d="M1.5,4.5h10v10M11.5,4.5l3-3" fill="none" stroke="#444"/><path d="M1.5,4.5l3-3h10l-3,3z" fill="#8a96a4" stroke="#444"/></svg>
<svg style="left:1517px;top:107px" width="16" height="16" viewBox="0 0 16 16"><path d="M1.5,4.5l3-3h10v10l-3,3h-10z" fill="#fff" stroke="#444"/><path d="M1.5,4.5h10v10M11.5,4.5l3-3" fill="none" stroke="#444"/><path d="M1.5,14.5l3-3h10l-3,3z" fill="#8a96a4" stroke="#444"/><rect x="4.5" y="1.5" width="10" height="10" fill="none" stroke="#444"/></svg>
<svg style="left:1540px;top:107px" width="16" height="16" viewBox="0 0 16 16"><path d="M1.5,4.5l3-3h10v10l-3,3h-10z" fill="#fff" stroke="#444"/><path d="M1.5,4.5h10v10M11.5,4.5l3-3" fill="none" stroke="#444"/><path d="M1.5,4.5l3-3v10l-3,3z" fill="#8a96a4" stroke="#444"/></svg>
<svg style="left:1563px;top:107px" width="16" height="16" viewBox="0 0 16 16"><path d="M1.5,4.5l3-3h10v10l-3,3h-10z" fill="#fff" stroke="#444"/><path d="M1.5,4.5h10v10M11.5,4.5l3-3" fill="none" stroke="#444"/><path d="M11.5,4.5l3-3v10l-3,3z" fill="#c0c8d0" stroke="#444"/></svg>
<svg style="left:1586px;top:107px" width="16" height="16" viewBox="0 0 16 16"><path d="M1.5,4.5l3-3h10v10l-3,3h-10z" fill="#fff" stroke="#444"/><path d="M1.5,4.5h10v10M11.5,4.5l3-3" fill="none" stroke="#444"/><rect x="1.5" y="4.5" width="10" height="10" fill="#8a96a4" stroke="#444"/></svg>
<svg style="left:1609px;top:107px" width="16" height="16" viewBox="0 0 16 16"><rect x="1.5" y="1.5" width="13" height="13" fill="#8a96a4" stroke="#444"/><rect x="4.5" y="4.5" width="7" height="7" fill="#fff" stroke="#444"/></svg>
<div class="a" style="left:1632px;top:107px;width:1px;height:16px;background:#222"></div>
<svg style="left:1638px;top:107px" width="16" height="16" viewBox="0 0 16 16"><path d="M8,1l6,6-6,8-6-8z" fill="#fff" stroke="#444"/><path d="M2,7l6,3 6-3M8,10v5" fill="none" stroke="#444"/><path d="M2,7l6,3v5z" fill="#8a96a4"/></svg>
<svg style="left:1661px;top:107px" width="16" height="16" viewBox="0 0 16 16"><path d="M8,1l6,6-6,8-6-8z" fill="#fff" stroke="#444"/><path d="M2,7l6,3 6-3M8,10v5" fill="none" stroke="#444"/><path d="M14,7l-6,3v5z" fill="#8a96a4"/></svg>
<svg style="left:1684px;top:107px" width="16" height="16" viewBox="0 0 16 16"><path d="M8,1l6,6-6,8-6-8z" fill="#fff" stroke="#444"/><path d="M2,7l6,3 6-3M8,10v5" fill="none" stroke="#444"/><path d="M8,1l6,6-6,3z" fill="#8a96a4"/></svg>
<svg style="left:1707px;top:107px" width="16" height="16" viewBox="0 0 16 16"><path d="M8,1l6,6-6,8-6-8z" fill="#fff" stroke="#444"/><path d="M2,7l6,3 6-3M8,10v5" fill="none" stroke="#444"/><path d="M8,1l-6,6 6,3z" fill="#8a96a4"/></svg>
<div class="a" style="left:1730px;top:107px;width:1px;height:16px;background:#222"></div>
<svg style="left:1736px;top:107px" width="16" height="16" viewBox="0 0 16 16"><rect x="1.5" y="5.5" width="13" height="9" fill="#dde1e6" stroke="#444"/><circle cx="8" cy="10" r="3" fill="#fff" stroke="#444"/><circle cx="13" cy="3" r="2.5" fill="#f08010"/></svg>
<div class="a" style="left:1759px;top:107px;width:1px;height:16px;background:#222"></div>
<svg style="left:1766px;top:107px" width="16" height="16" viewBox="0 0 16 16"><circle cx="7" cy="7" r="5" fill="#fff" stroke="#333" stroke-width="1.5"/><path d="M3,7h9M6,4l-3,3 3,3" stroke="#222" stroke-width="1.8" fill="none"/><path d="M11,11l4,4" stroke="#333" stroke-width="2"/></svg>
<div class="a" style="left:1786px;top:105px;width:70px;height:20px;background:#fafafa;border-left:1px solid #d0d0d0"></div>
<div class="a" style="left:57px;top:131px;width:1707px;height:677px;background:#8c8c8c;border-right:2px solid #fff;border-bottom:2px solid #fff"></div>
<div class="a" style="left:59px;top:133px;width:1703px;height:658px;background:#000"></div>
<div class="a" style="left:59px;top:791px;width:1703px;height:15px;background:#efefef"></div>
<div class="a" style="left:0px;top:131px;width:25px;height:405px;background:#efefef;border:1px solid #3e3e3e"></div>
<div class="a" style="left:1px;top:132px;width:23px;height:8px;background:#5c5c5c"></div>
<svg style="left:1px;top:132px" width="23" height="8"><rect x="3" y="2" width="1" height="1" fill="#111"/><rect x="3" y="3" width="1" height="1" fill="#909090"/><rect x="5" y="2" width="1" height="1" fill="#111"/><rect x="5" y="3" width="1" height="1" fill="#909090"/><rect x="7" y="2" width="1" height="1" fill="#111"/><rect x="7" y="3" width="1" height="1" fill="#909090"/><rect x="9" y="2" width="1" height="1" fill="#111"/><rect x="9" y="3" width="1" height="1" fill="#909090"/><rect x="11" y="2" width="1" height="1" fill="#111"/><rect x="11" y="3" width="1" height="1" fill="#909090"/><rect x="13" y="2" width="1" height="1" fill="#111"/><rect x="13" y="3" width="1" height="1" fill="#909090"/><rect x="15" y="2" width="1" height="1" fill="#111"/><rect x="15" y="3" width="1" height="1" fill="#909090"/><rect x="3" y="4" width="1" height="1" fill="#111"/><rect x="3" y="5" width="1" height="1" fill="#909090"/><rect x="5" y="4" width="1" height="1" fill="#111"/><rect x="5" y="5" width="1" height="1" fill="#909090"/><rect x="7" y="4" width="1" height="1" fill="#111"/><rect x="7" y="5" width="1" height="1" fill="#909090"/><rect x="9" y="4" width="1" height="1" fill="#111"/><rect x="9" y="5" width="1" height="1" fill="#909090"/><rect x="11" y="4" width="1" height="1" fill="#111"/><rect x="11" y="5" width="1" height="1" fill="#909090"/><rect x="13" y="4" width="1" height="1" fill="#111"/><rect x="13" y="5" width="1" height="1" fill="#909090"/><rect x="15" y="4" width="1" height="1" fill="#111"/><rect x="15" y="5" width="1" height="1" fill="#909090"/></svg>
<svg style="left:5px;top:143px" width="16" height="16" viewBox="0 0 16 16"><path d="M3,12l9-10 3,2.5-9,10z" fill="#e8d0a0" stroke="#6a5a30" stroke-width=".8"/><path d="M3,12l3,2.5-1.5,1.3-2.8-1.5z" fill="#d84a10"/><path d="M0,15.5h16" stroke="#333"/></svg>
<svg style="left:5px;top:165px" width="16" height="16" viewBox="0 0 16 16"><circle cx="4.5" cy="3.5" r="3" fill="#e8eaee" stroke="#444"/><circle cx="9" cy="11" r="3.5" fill="#9fd0f0" stroke="#1a78d8"/><circle cx="12" cy="12" r="3" fill="#9fd0f0" stroke="#1a78d8"/><path d="M9,2.5h4v3M11.5,4l1.5,2 1.5-2" stroke="#222" fill="none" stroke-width="1.2"/></svg>
<svg style="left:5px;top:187px" width="16" height="16" viewBox="0 0 16 16"><path d="M6.5,3v11h-5z" fill="#fff" stroke="#333"/><path d="M9.5,3v11h5z" fill="#9fd0f0" stroke="#1a78d8"/><path d="M8,0v16" stroke="#222" stroke-width="1.2"/></svg>
<svg style="left:5px;top:209px" width="16" height="16" viewBox="0 0 16 16"><path d="M1.5,14.5v-4q0-3 3-3h1q0-5 4-5t4,4v1h2v7z" fill="#fff" stroke="#222" stroke-width="1.2"/><path d="M4,14v-2q0-2 2-2h3q0-3 1-3 2,0 2,3h3" fill="none" stroke="#1a78d8" stroke-width="1.3"/></svg>
<svg style="left:5px;top:231px" width="16" height="16" viewBox="0 0 16 16"><rect x="1" y="1" width="5" height="5" fill="#fff" stroke="#1a78d8"/><rect x="9" y="1" width="5" height="5" fill="#fff" stroke="#1a78d8"/><rect x="1" y="9" width="5" height="5" fill="#9fd0f0" stroke="#1a78d8"/><path d="M9,9h5v5h-5z" fill="#fff" stroke="#1a78d8"/><path d="M11,15l4-4v4z" fill="#111"/></svg>
<svg style="left:5px;top:253px" width="16" height="16" viewBox="0 0 16 16"><path d="M8,0l3,3h-2v4h4v-2l3,3-3,3v-2h-4v4h2l-3,3-3-3h2v-4h-4v2l-3-3 3-3v2h4v-4h-2z" fill="#333"/><rect x="6" y="6" width="4" height="4" fill="#fff" stroke="#333"/></svg>
<svg style="left:5px;top:275px" width="16" height="16" viewBox="0 0 16 16"><path d="M12,3a6,6 0 1 1 -6,-1" fill="none" stroke="#333" stroke-width="1.5"/><path d="M4,0l4,2-3,3z" fill="#333"/></svg>
<svg style="left:5px;top:297px" width="16" height="16" viewBox="0 0 16 16"><rect x="1.5" y="7.5" width="7" height="7" fill="#fff" stroke="#333"/><path d="M1.5,7.5v-6h13v13h-6" fill="#9fd0f0" stroke="#1a78d8" stroke-width="1.6"/><rect x="1.5" y="7.5" width="7" height="7" fill="#fff" stroke="#333"/></svg>
<svg style="left:5px;top:319px" width="16" height="16" viewBox="0 0 16 16"><rect x="1.5" y="1.5" width="8" height="13" fill="#fff" stroke="#333"/><path d="M9,1.5h3l3,13h-6" fill="#9fd0f0" stroke="#1a78d8"/><path d="M4,10h6M8,8l2,2-2,2" stroke="#111" stroke-width="1.5" fill="none"/></svg>
<svg style="left:5px;top:341px" width="16" height="16" viewBox="0 0 16 16"><path d="M1,14l5-5M10,5l5-5" stroke="#1a78d8" stroke-width="1.5"/><path d="M5,6h1M12,8h2M8,8h2" stroke="#1a78d8" stroke-width="1.2"/></svg>
<svg style="left:5px;top:363px" width="16" height="16" viewBox="0 0 16 16"><path d="M1,8h2M5,8h2M9,8h2" stroke="#1a78d8" stroke-width="1.2"/><path d="M11,14l4-10" stroke="#1a78d8" stroke-width="1.5"/></svg>
<svg style="left:5px;top:385px" width="16" height="16" viewBox="0 0 16 16"><path d="M1,14v-9h4M9,5h6v9" fill="none" stroke="#333"/><rect x="6" y="3" width="3" height="3" fill="#1a78d8"/></svg>
<svg style="left:5px;top:407px" width="16" height="16" viewBox="0 0 16 16"><path d="M1,14v-9h4M10,5h5v9" fill="none" stroke="#333"/><rect x="3" y="3" width="3" height="3" fill="#1a78d8"/><rect x="10" y="3" width="3" height="3" fill="#1a78d8"/></svg>
<svg style="left:5px;top:429px" width="16" height="16" viewBox="0 0 16 16"><path d="M1,8h5M10,8h5" stroke="#1a78d8" stroke-width="1.5"/><path d="M4,5l3,3-3,3M12,5l-3,3 3,3" fill="#1a78d8" stroke="#1a78d8"/></svg>
<svg style="left:5px;top:451px" width="16" height="16" viewBox="0 0 16 16"><path d="M1.5,15v-8l6-6h8" fill="none" stroke="#1a78d8" stroke-width="1.5"/><path d="M1.5,15h14v-14" fill="#fff" stroke="#333" stroke-width=".5" opacity=".4"/></svg>
<svg style="left:5px;top:474px" width="16" height="16" viewBox="0 0 16 16"><path d="M1.5,15v-6q0-8 8-8h6" fill="none" stroke="#1a78d8" stroke-width="1.5"/><path d="M2,15h13v-13" fill="#fff" stroke="#444" stroke-width=".5" opacity=".4"/></svg>
<svg style="left:5px;top:496px" width="16" height="16" viewBox="0 0 16 16"><path d="M1,13q3,4 6-2t7-3" fill="none" stroke="#1a78d8" stroke-width="1.5"/><path d="M1,15l2-4M13,8l2-5" stroke="#333"/></svg>
<svg style="left:5px;top:518px" width="16" height="16" viewBox="0 0 16 16"><path d="M3,6l4-3h7v6l-4,3h-7z" fill="#9fd0f0" stroke="#1a78d8"/><path d="M3,6h7v6M10,6l4-3" fill="none" stroke="#1a78d8"/><path d="M1,14h14" stroke="#1a78d8"/></svg>
<div class="a" style="left:28px;top:131px;width:25px;height:448px;background:#efefef;border:1px solid #3e3e3e"></div>
<div class="a" style="left:29px;top:132px;width:23px;height:8px;background:#5c5c5c"></div>
<svg style="left:29px;top:132px" width="23" height="8"><rect x="3" y="2" width="1" height="1" fill="#111"/><rect x="3" y="3" width="1" height="1" fill="#909090"/><rect x="5" y="2" width="1" height="1" fill="#111"/><rect x="5" y="3" width="1" height="1" fill="#909090"/><rect x="7" y="2" width="1" height="1" fill="#111"/><rect x="7" y="3" width="1" height="1" fill="#909090"/><rect x="9" y="2" width="1" height="1" fill="#111"/><rect x="9" y="3" width="1" height="1" fill="#909090"/><rect x="11" y="2" width="1" height="1" fill="#111"/><rect x="11" y="3" width="1" height="1" fill="#909090"/><rect x="13" y="2" width="1" height="1" fill="#111"/><rect x="13" y="3" width="1" height="1" fill="#909090"/><rect x="15" y="2" width="1" height="1" fill="#111"/><rect x="15" y="3" width="1" height="1" fill="#909090"/><rect x="3" y="4" width="1" height="1" fill="#111"/><rect x="3" y="5" width="1" height="1" fill="#909090"/><rect x="5" y="4" width="1" height="1" fill="#111"/><rect x="5" y="5" width="1" height="1" fill="#909090"/><rect x="7" y="4" width="1" height="1" fill="#111"/><rect x="7" y="5" width="1" height="1" fill="#909090"/><rect x="9" y="4" width="1" height="1" fill="#111"/><rect x="9" y="5" width="1" height="1" fill="#909090"/><rect x="11" y="4" width="1" height="1" fill="#111"/><rect x="11" y="5" width="1" height="1" fill="#909090"/><rect x="13" y="4" width="1" height="1" fill="#111"/><rect x="13" y="5" width="1" height="1" fill="#909090"/><rect x="15" y="4" width="1" height="1" fill="#111"/><rect x="15" y="5" width="1" height="1" fill="#909090"/></svg>
<svg style="left:32px;top:143px" width="16" height="16" viewBox="0 0 16 16"><path d="M3,13l10-10" stroke="#444"/><rect x="1.5" y="11.5" width="3" height="3" fill="#fff" stroke="#333"/><rect x="11.5" y="1.5" width="3" height="3" fill="#fff" stroke="#333"/></svg>
<svg style="left:32px;top:165px" width="16" height="16" viewBox="0 0 16 16"><path d="M1,15l14-14" stroke="#444"/><path d="M1,15h4M1,15v-4M15,1h-4M15,1v4" stroke="#333" stroke-width="1.5"/><rect x="6.5" y="6.5" width="3" height="3" fill="#fff" stroke="#333"/></svg>
<svg style="left:32px;top:187px" width="16" height="16" viewBox="0 0 16 16"><path d="M2,12h6a4,4 0 0 0 0,-8h-2" fill="none" stroke="#444"/><rect x="1" y="10.5" width="3" height="3" fill="#fff" stroke="#333"/><rect x="6" y="10.5" width="3" height="3" fill="#fff" stroke="#333"/><rect x="4" y="2.5" width="3" height="3" fill="#fff" stroke="#333"/></svg>
<svg style="left:32px;top:209px" width="16" height="16" viewBox="0 0 16 16"><path d="M8,1.5l6.5,5-2.5,8h-8l-2.5-8z" fill="#e8ecf0" stroke="#444"/></svg>
<svg style="left:32px;top:231px" width="16" height="16" viewBox="0 0 16 16"><rect x="2.5" y="4.5" width="11" height="8" fill="#e8ecf0" stroke="#444"/><rect x="1" y="11" width="3" height="3" fill="#fff" stroke="#333"/><rect x="12" y="3" width="3" height="3" fill="#fff" stroke="#333"/></svg>
<svg style="left:32px;top:253px" width="16" height="16" viewBox="0 0 16 16"><path d="M2,14q0-11 12-12" fill="none" stroke="#444"/><rect x="1" y="12" width="3" height="3" fill="#fff" stroke="#333"/><rect x="12" y="1" width="3" height="3" fill="#fff" stroke="#333"/></svg>
<svg style="left:32px;top:275px" width="16" height="16" viewBox="0 0 16 16"><circle cx="8" cy="8" r="6.5" fill="#e8ecf0" stroke="#444"/><path d="M8,8l3-3" stroke="#333"/><rect x="7" y="7" width="2" height="2" fill="#333"/></svg>
<svg style="left:32px;top:297px" width="16" height="16" viewBox="0 0 16 16"><path d="M4,4q2-3 4,-1 3-2 5,1 3,2 0,5 2,3-1,4-2,3-5,0-3,2-5-1-3-2 0-4-2-3 2-4z" fill="#e8ecf0" stroke="#444"/></svg>
<svg style="left:32px;top:319px" width="16" height="16" viewBox="0 0 16 16"><path d="M1,14q3-10 7-6t7-7" fill="none" stroke="#333" stroke-width="1.2"/></svg>
<svg style="left:32px;top:341px" width="16" height="16" viewBox="0 0 16 16"><ellipse cx="8" cy="8" rx="6.5" ry="4.5" fill="#e8ecf0" stroke="#444"/><rect x="1" y="7" width="2" height="2" fill="#333"/><rect x="13" y="7" width="2" height="2" fill="#333"/></svg>
<svg style="left:32px;top:363px" width="16" height="16" viewBox="0 0 16 16"><path d="M3,10a6,4 0 1 1 10,0" fill="none" stroke="#444"/><path d="M3,10q5,4 10,0" fill="none" stroke="#444" stroke-dasharray="1,1"/></svg>
<svg style="left:32px;top:385px" width="16" height="16" viewBox="0 0 16 16"><path d="M3.5,2.5h7l3,3v6h-10z" fill="#e8ecf0" stroke="#444"/><rect x="1.5" y="7.5" width="8" height="6" fill="#fff" stroke="#444"/><circle cx="10" cy="12" r="2.5" fill="#fff" stroke="#444"/><path d="M12,15l3-3v3z" fill="#111"/></svg>
<svg style="left:32px;top:407px" width="16" height="16" viewBox="0 0 16 16"><rect x="2.5" y="3.5" width="9" height="7" fill="#e8ecf0" stroke="#444"/><circle cx="11" cy="12" r="3" fill="#fff" stroke="#444"/><rect x="1" y="9" width="3" height="3" fill="#fff" stroke="#333"/></svg>
<svg style="left:32px;top:429px" width="16" height="16" viewBox="0 0 16 16"><rect x="6.5" y="6.5" width="3" height="3" fill="none" stroke="#444"/></svg>
<svg style="left:32px;top:451px" width="16" height="16" viewBox="0 0 16 16"><rect x="3.5" y="3.5" width="9" height="9" fill="#fff" stroke="#444"/><path d="M4,7l3-3M4,10l6-6M5,12l7-7M8,12l4-4" stroke="#888"/><path d="M1,3.5h14M1,12.5h14M3.5,1v14M12.5,1v14" stroke="#444"/></svg>
<svg style="left:32px;top:474px" width="16" height="16" viewBox="0 0 16 16"><defs><linearGradient id="gg" x1="0" y1="0" x2="1" y2="1"><stop offset="0" stop-color="#fff"/><stop offset="1" stop-color="#333"/></linearGradient></defs><rect x="3.5" y="3.5" width="9" height="9" fill="url(#gg)" stroke="#444"/><path d="M1,3.5h14M1,12.5h14M3.5,1v14M12.5,1v14" stroke="#444"/></svg>
<svg style="left:32px;top:496px" width="16" height="16" viewBox="0 0 16 16"><path d="M1.5,4.5l4-3h6l4,4v8h-14z" fill="#e8ecf0" stroke="#444"/><circle cx="7" cy="9" r="3" fill="#fff" stroke="#444"/></svg>
<svg style="left:32px;top:518px" width="16" height="16" viewBox="0 0 16 16"><rect x="1.5" y="1.5" width="13" height="13" fill="#fff" stroke="#555"/><rect x="1.5" y="1.5" width="13" height="3" fill="#bbb"/><path d="M1.5,7.5h13M1.5,10.5h13M6,4.5v10M10,4.5v10" stroke="#888"/></svg>
<svg style="left:32px;top:540px" width="16" height="16" viewBox="0 0 16 16"><text x="8" y="15" font-size="17" text-anchor="middle" font-family="Liberation Sans" fill="#333">A</text></svg>
<svg style="left:32px;top:562px" width="16" height="16" viewBox="0 0 16 16"><circle cx="4" cy="4" r="3" fill="#5aa040" stroke="#2a6020"/><circle cx="12" cy="12" r="3" fill="#8ac0f0" stroke="#1a78d8"/><path d="M6,4h3v5" fill="none" stroke="#111"/></svg>
<div class="a" style="left:0px;top:537px;width:25px;height:147px;background:#efefef;border:1px solid #3e3e3e"></div>
<div class="a" style="left:1px;top:538px;width:23px;height:8px;background:#5c5c5c"></div>
<svg style="left:1px;top:538px" width="23" height="8"><rect x="3" y="2" width="1" height="1" fill="#111"/><rect x="3" y="3" width="1" height="1" fill="#909090"/><rect x="5" y="2" width="1" height="1" fill="#111"/><rect x="5" y="3" width="1" height="1" fill="#909090"/><rect x="7" y="2" width="1" height="1" fill="#111"/><rect x="7" y="3" width="1" height="1" fill="#909090"/><rect x="9" y="2" width="1" height="1" fill="#111"/><rect x="9" y="3" width="1" height="1" fill="#909090"/><rect x="11" y="2" width="1" height="1" fill="#111"/><rect x="11" y="3" width="1" height="1" fill="#909090"/><rect x="13" y="2" width="1" height="1" fill="#111"/><rect x="13" y="3" width="1" height="1" fill="#909090"/><rect x="15" y="2" width="1" height="1" fill="#111"/><rect x="15" y="3" width="1" height="1" fill="#909090"/><rect x="3" y="4" width="1" height="1" fill="#111"/><rect x="3" y="5" width="1" height="1" fill="#909090"/><rect x="5" y="4" width="1" height="1" fill="#111"/><rect x="5" y="5" width="1" height="1" fill="#909090"/><rect x="7" y="4" width="1" height="1" fill="#111"/><rect x="7" y="5" width="1" height="1" fill="#909090"/><rect x="9" y="4" width="1" height="1" fill="#111"/><rect x="9" y="5" width="1" height="1" fill="#909090"/><rect x="11" y="4" width="1" height="1" fill="#111"/><rect x="11" y="5" width="1" height="1" fill="#909090"/><rect x="13" y="4" width="1" height="1" fill="#111"/><rect x="13" y="5" width="1" height="1" fill="#909090"/><rect x="15" y="4" width="1" height="1" fill="#111"/><rect x="15" y="5" width="1" height="1" fill="#909090"/></svg>
<svg style="left:5px;top:549px" width="16" height="16" viewBox="0 0 16 16"><rect x="1.5" y="1.5" width="9" height="8" fill="#fff" stroke="#444"/><rect x="4.5" y="5.5" width="10" height="9" fill="#aab4c0" stroke="#444"/><rect x="1.5" y="1.5" width="9" height="8" fill="none" stroke="#444"/></svg>
<svg style="left:5px;top:571px" width="16" height="16" viewBox="0 0 16 16"><rect x="4.5" y="5.5" width="10" height="9" fill="#fff" stroke="#444"/><rect x="1.5" y="1.5" width="9" height="8" fill="#aab4c0" stroke="#444"/></svg>
<svg style="left:5px;top:593px" width="16" height="16" viewBox="0 0 16 16"><rect x="1.5" y="1.5" width="9" height="8" fill="#fff" stroke="#444"/><rect x="4.5" y="6.5" width="10" height="8" fill="#aab4c0" stroke="#444"/></svg>
<svg style="left:5px;top:615px" width="16" height="16" viewBox="0 0 16 16"><rect x="4.5" y="5.5" width="10" height="9" fill="#aab4c0" stroke="#444"/><rect x="1.5" y="1.5" width="9" height="8" fill="#fff" stroke="#444"/></svg>
<svg style="left:5px;top:642px" width="16" height="16" viewBox="0 0 16 16"><text x="7" y="7" font-size="6" font-weight="bold" text-anchor="middle" font-family="Liberation Mono" fill="#222">ABC</text><path d="M3,9h10v5h-10" fill="none" stroke="#222"/><path d="M12,15l3-3v3z" fill="#111"/></svg>
<svg style="left:5px;top:663px" width="16" height="16" viewBox="0 0 16 16"><rect x="1.5" y="1.5" width="11" height="8" fill="#8a96a4" stroke="#444"/><path d="M8,11v4M5,13h9M12,11l3,4" stroke="#444"/></svg>
<div class="a" style="left:4px;top:636px;width:18px;height:1px;background:#a8a8a8"></div>
<div class="a" style="left:1768px;top:131px;width:25px;height:338px;background:#efefef;border:1px solid #3e3e3e"></div>
<div class="a" style="left:1769px;top:132px;width:23px;height:8px;background:#5c5c5c"></div>
<svg style="left:1769px;top:132px" width="23" height="8"><rect x="3" y="2" width="1" height="1" fill="#111"/><rect x="3" y="3" width="1" height="1" fill="#909090"/><rect x="5" y="2" width="1" height="1" fill="#111"/><rect x="5" y="3" width="1" height="1" fill="#909090"/><rect x="7" y="2" width="1" height="1" fill="#111"/><rect x="7" y="3" width="1" height="1" fill="#909090"/><rect x="9" y="2" width="1" height="1" fill="#111"/><rect x="9" y="3" width="1" height="1" fill="#909090"/><rect x="11" y="2" width="1" height="1" fill="#111"/><rect x="11" y="3" width="1" height="1" fill="#909090"/><rect x="13" y="2" width="1" height="1" fill="#111"/><rect x="13" y="3" width="1" height="1" fill="#909090"/><rect x="15" y="2" width="1" height="1" fill="#111"/><rect x="15" y="3" width="1" height="1" fill="#909090"/><rect x="3" y="4" width="1" height="1" fill="#111"/><rect x="3" y="5" width="1" height="1" fill="#909090"/><rect x="5" y="4" width="1" height="1" fill="#111"/><rect x="5" y="5" width="1" height="1" fill="#909090"/><rect x="7" y="4" width="1" height="1" fill="#111"/><rect x="7" y="5" width="1" height="1" fill="#909090"/><rect x="9" y="4" width="1" height="1" fill="#111"/><rect x="9" y="5" width="1" height="1" fill="#909090"/><rect x="11" y="4" width="1" height="1" fill="#111"/><rect x="11" y="5" width="1" height="1" fill="#909090"/><rect x="13" y="4" width="1" height="1" fill="#111"/><rect x="13" y="5" width="1" height="1" fill="#909090"/><rect x="15" y="4" width="1" height="1" fill="#111"/><rect x="15" y="5" width="1" height="1" fill="#909090"/></svg>
<svg style="left:1772px;top:143px" width="16" height="16" viewBox="0 0 16 16"><rect x="1" y="2" width="14" height="11" fill="#fff" stroke="#1a78d8" stroke-width="1.5"/><path d="M8,13v-3h7" fill="none" stroke="#1a78d8" stroke-width="1.2"/><path d="M12,16l4-4v4z" fill="#111"/></svg>
<svg style="left:1772px;top:166px" width="16" height="16" viewBox="0 0 16 16"><path d="M2,14l5-6h8" fill="none" stroke="#1a78d8" stroke-width="1.2"/><circle cx="2" cy="14" r="1.5" fill="#1a78d8"/><text x="11" y="7" font-size="7" fill="#1a78d8" font-family="Liberation Sans" text-anchor="middle">3</text><path d="M12,16l4-4v4z" fill="#111"/></svg>
<svg style="left:1772px;top:187px" width="16" height="16" viewBox="0 0 16 16"><circle cx="6" cy="8" r="4.5" fill="none" stroke="#222" stroke-width="1.2"/><path d="M1,8h14M6,3v10" stroke="#e03030" stroke-dasharray="2,1"/><rect x="11" y="4" width="3" height="8" fill="#fff" stroke="#222"/><path d="M6,2q3,0 4,2M6,14q3,0 4-2" stroke="#1a78d8" fill="none"/></svg>
<svg style="left:1772px;top:210px" width="16" height="16" viewBox="0 0 16 16"><rect x="1.5" y="1.5" width="8" height="8" fill="#e8f0f8" stroke="#222"/><path d="M14,9a5,5 0 0 1 -8,4" fill="none" stroke="#1a78d8" stroke-width="1.2" stroke-dasharray="3,1"/><path d="M12,16l4-4v4z" fill="#111"/></svg>
<svg style="left:1772px;top:231px" width="16" height="16" viewBox="0 0 16 16"><path d="M1.5,2v12M14.5,2v12M3,8h11" stroke="#1a78d8" stroke-width="1.2"/><circle cx="6" cy="8" r="3.5" fill="none" stroke="#222" stroke-width="1.2"/><path d="M8,11l3,3" stroke="#222" stroke-width="1.2"/><path d="M12,16l4-4v4z" fill="#111"/></svg>
<svg style="left:1772px;top:253px" width="16" height="16" viewBox="0 0 16 16"><text x="7" y="6" font-size="6" fill="#1a78d8" font-family="Liberation Sans" text-anchor="middle">3.2</text><path d="M1,7h10l-5,8z" fill="none" stroke="#1a78d8" stroke-width="1.2"/><path d="M11,7l4-6" stroke="#1a78d8"/><path d="M12,16l4-4v4z" fill="#111"/></svg>
<svg style="left:1772px;top:275px" width="16" height="16" viewBox="0 0 16 16"><path d="M3,14l10-10M6,15l8-8" stroke="#222" stroke-width="1.2"/><text x="4" y="14" font-size="7" font-weight="bold" fill="#222" font-family="Liberation Sans">3</text><path d="M11,2h1M13,3h1M12,5h1" stroke="#222"/><path d="M12,16l4-4v4z" fill="#111"/></svg>
<svg style="left:1772px;top:297px" width="16" height="16" viewBox="0 0 16 16"><text x="8" y="11" font-size="9" fill="#1a78d8" font-family="Liberation Sans" text-anchor="middle">Text</text><path d="M12,16l4-4v4z" fill="#111"/></svg>
<svg style="left:1772px;top:320px" width="16" height="16" viewBox="0 0 16 16"><path d="M1.5,14.5v-12h8M1.5,7h10M1.5,10.5h10M5,7v8M8,7v8" fill="none" stroke="#222" stroke-width="1.2"/><rect x="10" y="3" width="5" height="6" fill="#fff" stroke="#222"/><path d="M12,16l4-4v4z" fill="#111"/></svg>
<svg style="left:1772px;top:342px" width="16" height="16" viewBox="0 0 16 16"><path d="M2,5l5-4 8,8-5,5z" fill="#fff" stroke="#222"/><circle cx="6" cy="5" r="1.5" fill="#e03030"/><path d="M8,12l6-8" stroke="#c040c0"/><path d="M9,11l4-4" stroke="#f0c010" stroke-width="1.5"/></svg>
<svg style="left:1772px;top:364px" width="16" height="16" viewBox="0 0 16 16"><path d="M2,7l4-3h6v4l-4,3h-6z" fill="#2a7ad8" stroke="#111"/><path d="M6,11l4-3h5v4l-4,3h-5z" fill="#1a5ab0" stroke="#111"/><rect x="2" y="11" width="5" height="3" fill="#0a3a80"/></svg>
<svg style="left:1772px;top:386px" width="16" height="16" viewBox="0 0 16 16"><rect x="1.5" y="1.5" width="6" height="6" fill="#fff" stroke="#222"/><rect x="5.5" y="4.5" width="6" height="6" fill="#fff" stroke="#222"/><rect x="9.5" y="9.5" width="6" height="6" fill="#fff" stroke="#222"/><path d="M1,10q1,5 5,5" stroke="#1a78d8" fill="none"/></svg>
<svg style="left:1772px;top:408px" width="16" height="16" viewBox="0 0 16 16"><circle cx="11" cy="5" r="4" fill="#eee" stroke="#444"/><circle cx="11" cy="5" r="1.5" fill="#fff" stroke="#444"/><path d="M8,8l-6,6" stroke="#555" stroke-width="2.5"/><path d="M12,16l4-4v4z" fill="#111"/></svg>
<svg style="left:1772px;top:430px" width="16" height="16" viewBox="0 0 16 16"><rect x="1.5" y="5.5" width="12" height="10" fill="#fff" stroke="#222"/><path d="M1.5,9h12M1.5,12h12M5,5.5v10M9,5.5v10" stroke="#1a78d8"/><path d="M7,4l5-3" stroke="#1a78d8" stroke-width="1.5"/><path d="M12,16l4-4v4z" fill="#111"/></svg>
<svg style="left:1772px;top:452px" width="16" height="16" viewBox="0 0 16 16"><path d="M2,6l7-4 6,4v6l-7,4-6-4z" fill="#3a9a50" stroke="#1a4a2a"/><path d="M2,6l7,4 6-4" fill="#f0d040" stroke="#1a4a2a"/><path d="M4,5l6-3 4,3-6,3z" fill="#2a7ad8"/></svg>
<div class="a" style="left:1796px;top:131px;width:25px;height:274px;background:#efefef;border:1px solid #3e3e3e"></div>
<div class="a" style="left:1797px;top:132px;width:23px;height:8px;background:#5c5c5c"></div>
<svg style="left:1797px;top:132px" width="23" height="8"><rect x="3" y="2" width="1" height="1" fill="#111"/><rect x="3" y="3" width="1" height="1" fill="#909090"/><rect x="5" y="2" width="1" height="1" fill="#111"/><rect x="5" y="3" width="1" height="1" fill="#909090"/><rect x="7" y="2" width="1" height="1" fill="#111"/><rect x="7" y="3" width="1" height="1" fill="#909090"/><rect x="9" y="2" width="1" height="1" fill="#111"/><rect x="9" y="3" width="1" height="1" fill="#909090"/><rect x="11" y="2" width="1" height="1" fill="#111"/><rect x="11" y="3" width="1" height="1" fill="#909090"/><rect x="13" y="2" width="1" height="1" fill="#111"/><rect x="13" y="3" width="1" height="1" fill="#909090"/><rect x="15" y="2" width="1" height="1" fill="#111"/><rect x="15" y="3" width="1" height="1" fill="#909090"/><rect x="3" y="4" width="1" height="1" fill="#111"/><rect x="3" y="5" width="1" height="1" fill="#909090"/><rect x="5" y="4" width="1" height="1" fill="#111"/><rect x="5" y="5" width="1" height="1" fill="#909090"/><rect x="7" y="4" width="1" height="1" fill="#111"/><rect x="7" y="5" width="1" height="1" fill="#909090"/><rect x="9" y="4" width="1" height="1" fill="#111"/><rect x="9" y="5" width="1" height="1" fill="#909090"/><rect x="11" y="4" width="1" height="1" fill="#111"/><rect x="11" y="5" width="1" height="1" fill="#909090"/><rect x="13" y="4" width="1" height="1" fill="#111"/><rect x="13" y="5" width="1" height="1" fill="#909090"/><rect x="15" y="4" width="1" height="1" fill="#111"/><rect x="15" y="5" width="1" height="1" fill="#909090"/></svg>
<svg style="left:1800px;top:143px" width="16" height="16" viewBox="0 0 16 16"><rect x="1" y="2" width="14" height="11" fill="#fff" stroke="#1a78d8" stroke-width="1.5"/><path d="M1,4h6v-2" fill="none" stroke="#1a78d8"/><path d="M9,13v-2h6" fill="none" stroke="#1a78d8"/></svg>
<svg style="left:1800px;top:166px" width="16" height="16" viewBox="0 0 16 16"><path d="M2,15h13v-14" fill="none" stroke="#1a78d8" stroke-width="1.2"/><path d="M3,9h11M3,12h11M6,9v6M9,9v6M12,9v6" stroke="#1a78d8"/></svg>
<svg style="left:1800px;top:187px" width="16" height="16" viewBox="0 0 16 16"><path d="M2,14l5-6h8" fill="none" stroke="#1a78d8" stroke-width="1.2"/><circle cx="2" cy="14" r="1.5" fill="#1a78d8"/><text x="11" y="7" font-size="7" fill="#1a78d8" font-family="Liberation Sans" text-anchor="middle">3</text></svg>
<svg style="left:1800px;top:215px" width="16" height="16" viewBox="0 0 16 16"><path d="M3,14l10-10M6,15l8-8" stroke="#222" stroke-width="1.2"/><text x="4" y="14" font-size="7" font-weight="bold" fill="#222" font-family="Liberation Sans">3</text><path d="M11,2h1M13,3h1M12,5h1" stroke="#222"/></svg>
<svg style="left:1800px;top:244px" width="16" height="16" viewBox="0 0 16 16"><path d="M1.5,2v12M14.5,2v12M3,8h11" stroke="#1a78d8" stroke-width="1.2"/><circle cx="6" cy="8" r="3.5" fill="none" stroke="#222" stroke-width="1.2"/><path d="M8,11l3,3" stroke="#222" stroke-width="1.2"/></svg>
<svg style="left:1800px;top:264px" width="16" height="16" viewBox="0 0 16 16"><text x="7" y="6" font-size="6" fill="#1a78d8" font-family="Liberation Sans" text-anchor="middle">3.2</text><path d="M1,7h10l-5,8z" fill="none" stroke="#1a78d8" stroke-width="1.2"/><path d="M11,7l4-6" stroke="#1a78d8"/></svg>
<svg style="left:1800px;top:287px" width="16" height="16" viewBox="0 0 16 16"><rect x="1.5" y="3.5" width="13" height="9" fill="#fff" stroke="#1a78d8" stroke-width="1.2"/><circle cx="5" cy="8" r="2.5" fill="none" stroke="#1a78d8"/><path d="M8.5,3.5v9" stroke="#1a78d8"/><text x="12" y="11" font-size="7" fill="#1a78d8" font-family="Liberation Sans" text-anchor="middle">.1</text></svg>
<svg style="left:1800px;top:315px" width="16" height="16" viewBox="0 0 16 16"><circle cx="6" cy="8" r="4.5" fill="none" stroke="#222" stroke-width="1.2"/><path d="M1,8h14M6,3v10" stroke="#e03030" stroke-dasharray="2,1"/><rect x="11" y="4" width="3" height="8" fill="#fff" stroke="#222"/><path d="M6,2q3,0 4,2M6,14q3,0 4-2" stroke="#1a78d8" fill="none"/></svg>
<svg style="left:1800px;top:338px" width="16" height="16" viewBox="0 0 16 16"><path d="M1,3h9l5,5v8" fill="none" stroke="#1a78d8" stroke-width="1.3"/><path d="M11,2l1,1M13,4l1,1" stroke="#6a0"/></svg>
<svg style="left:1800px;top:360px" width="16" height="16" viewBox="0 0 16 16"><path d="M1,2l6,7M15,9l-8,0" stroke="#111" stroke-width="1.4"/><path d="M1,6l4,6M1,11l3,4M9,12l3,3M12,12l3,3" stroke="#e0e020"/><path d="M1,2v13h14" fill="none" stroke="#e0e020" stroke-width=".8"/></svg>
<svg style="left:1800px;top:389px" width="16" height="16" viewBox="0 0 16 16"><rect x="1.5" y="1.5" width="6" height="6" fill="#fff" stroke="#222"/><rect x="5.5" y="4.5" width="6" height="6" fill="#fff" stroke="#222"/><rect x="9.5" y="9.5" width="6" height="6" fill="#fff" stroke="#222"/><path d="M1,10q1,5 5,5" stroke="#1a78d8" fill="none"/></svg>
<div class="a" style="left:1799px;top:208px;width:19px;height:1px;background:#a8a8a8"></div>
<div class="a" style="left:1799px;top:236px;width:19px;height:1px;background:#a8a8a8"></div>
<div class="a" style="left:1799px;top:309px;width:19px;height:1px;background:#a8a8a8"></div>
<div class="a" style="left:1799px;top:381px;width:19px;height:1px;background:#a8a8a8"></div>
<div class="a" style="left:1824px;top:131px;width:25px;height:366px;background:#efefef;border:1px solid #3e3e3e"></div>
<div class="a" style="left:1825px;top:132px;width:23px;height:8px;background:#5c5c5c"></div>
<svg style="left:1825px;top:132px" width="23" height="8"><rect x="3" y="2" width="1" height="1" fill="#111"/><rect x="3" y="3" width="1" height="1" fill="#909090"/><rect x="5" y="2" width="1" height="1" fill="#111"/><rect x="5" y="3" width="1" height="1" fill="#909090"/><rect x="7" y="2" width="1" height="1" fill="#111"/><rect x="7" y="3" width="1" height="1" fill="#909090"/><rect x="9" y="2" width="1" height="1" fill="#111"/><rect x="9" y="3" width="1" height="1" fill="#909090"/><rect x="11" y="2" width="1" height="1" fill="#111"/><rect x="11" y="3" width="1" height="1" fill="#909090"/><rect x="13" y="2" width="1" height="1" fill="#111"/><rect x="13" y="3" width="1" height="1" fill="#909090"/><rect x="15" y="2" width="1" height="1" fill="#111"/><rect x="15" y="3" width="1" height="1" fill="#909090"/><rect x="3" y="4" width="1" height="1" fill="#111"/><rect x="3" y="5" width="1" height="1" fill="#909090"/><rect x="5" y="4" width="1" height="1" fill="#111"/><rect x="5" y="5" width="1" height="1" fill="#909090"/><rect x="7" y="4" width="1" height="1" fill="#111"/><rect x="7" y="5" width="1" height="1" fill="#909090"/><rect x="9" y="4" width="1" height="1" fill="#111"/><rect x="9" y="5" width="1" height="1" fill="#909090"/><rect x="11" y="4" width="1" height="1" fill="#111"/><rect x="11" y="5" width="1" height="1" fill="#909090"/><rect x="13" y="4" width="1" height="1" fill="#111"/><rect x="13" y="5" width="1" height="1" fill="#909090"/><rect x="15" y="4" width="1" height="1" fill="#111"/><rect x="15" y="5" width="1" height="1" fill="#909090"/></svg>
<svg style="left:1828px;top:143px" width="16" height="16" viewBox="0 0 16 16"><path d="M1.5,3.5h3v9h-3z M4.5,6.5h10v3h-10z" fill="#fff" stroke="#111" stroke-width="1.3"/><path d="M0,8h16" stroke="#e03030" stroke-dasharray="2,1"/></svg>
<svg style="left:1828px;top:166px" width="16" height="16" viewBox="0 0 16 16"><rect x="3.5" y="1.5" width="9" height="13" fill="#fff" stroke="#111" stroke-width="1.3"/><circle cx="8" cy="5.5" r="2.5" fill="none" stroke="#111" stroke-width="1.3"/><path d="M3.5,9.5h9" stroke="#111"/><path d="M0,15h16" stroke="#e03030" stroke-dasharray="2,1"/></svg>
<svg style="left:1828px;top:187px" width="16" height="16" viewBox="0 0 16 16"><path d="M3.5,15.5v-9h9v9z" fill="#fff" stroke="#111" stroke-width="1.3"/><circle cx="8" cy="6" r="4" fill="#fff" stroke="#111" stroke-width="1.3"/><path d="M6,15v-5h4v5" fill="none" stroke="#111"/><path d="M8,0v16M1,6h14" stroke="#e03030" stroke-dasharray="2,1"/></svg>
<svg style="left:1828px;top:210px" width="16" height="16" viewBox="0 0 16 16"><rect x="0" y="0" width="16" height="16" fill="#c8dcf0"/><path d="M1,8l4-4h10v8h-10z" fill="#fff" stroke="#111" stroke-width="1.3"/><path d="M11,4v8" stroke="#111"/><path d="M0,8h16" stroke="#e03030" stroke-dasharray="2,1"/></svg>
<svg style="left:1828px;top:231px" width="16" height="16" viewBox="0 0 16 16"><rect x="5.5" y="2.5" width="5" height="11" rx="2" fill="#fff" stroke="#111" stroke-width="1.2"/><path d="M5.5,6h5M5.5,10h5" stroke="#111"/><path d="M0,8h16" stroke="#e03030" stroke-dasharray="2,1"/></svg>
<svg style="left:1828px;top:253px" width="16" height="16" viewBox="0 0 16 16"><path d="M1,2h12M1,14h12M3,2l10,4-10,4 10,4" fill="none" stroke="#111" stroke-width="1.6"/></svg>
<svg style="left:1828px;top:275px" width="16" height="16" viewBox="0 0 16 16"><path d="M2.5,15.5v-11l3-3h3v3h6v11z" fill="#fff" stroke="#111" stroke-width="1.3"/><circle cx="6" cy="9" r="1.3" fill="#e03030"/><circle cx="11" cy="12" r="1.3" fill="#e03030"/><rect x="10" y="7" width="2.5" height="2.5" fill="none" stroke="#111"/><rect x="5" y="11" width="2.5" height="2.5" fill="none" stroke="#111"/></svg>
<svg style="left:1828px;top:298px" width="16" height="16" viewBox="0 0 16 16"><path d="M2.5,14.5v-5h11v5z M5.5,9.5v-4h5v4" fill="#fff" stroke="#111" stroke-width="1.3"/><path d="M8,1v15" stroke="#e03030" stroke-dasharray="2,1"/></svg>
<svg style="left:1828px;top:319px" width="16" height="16" viewBox="0 0 16 16"><path d="M3.5,4.5h9v7h-9z" fill="#fff" stroke="#111" stroke-width="1.3"/><path d="M1,8h2M13,8h2M5,4.5v-2h6v2M5,11.5v2h6v-2" fill="none" stroke="#111"/><path d="M0,8h16" stroke="#e03030" stroke-dasharray="2,1"/></svg>
<svg style="left:1828px;top:347px" width="16" height="16" viewBox="0 0 16 16"><path d="M11,2h-6v12h6M7,4v8" fill="none" stroke="#111" stroke-width="1.3"/><path d="M1,8h14" stroke="#e03030" stroke-dasharray="2,1"/></svg>
<svg style="left:1828px;top:369px" width="16" height="16" viewBox="0 0 16 16"><path d="M1.5,15.5v-5q0-9 9-9h5v6h-5q-3,0-3,3v5z" fill="#dde4ec" stroke="#111" stroke-width="1.2"/><path d="M4,15q0-10 11-10" fill="none" stroke="#e03030" stroke-dasharray="2,1"/></svg>
<svg style="left:1828px;top:390px" width="16" height="16" viewBox="0 0 16 16"><path d="M2,2h12M2,14h12M2,2v1h12v-1M2,14v-1h12v1M5,3v10M11,3v10" fill="none" stroke="#111" stroke-width="1.3"/><path d="M8,0v16" stroke="#e03030" stroke-dasharray="2,1"/></svg>
<svg style="left:1828px;top:413px" width="16" height="16" viewBox="0 0 16 16"><path d="M2.5,4.5h4v8h-4zM9.5,3.5h4v10h-4z" fill="#fff" stroke="#111" stroke-width="1.3"/><path d="M6.5,6h3M6.5,11h3" stroke="#111"/><path d="M0,8.5h16" stroke="#e03030" stroke-dasharray="2,1"/></svg>
<svg style="left:1828px;top:435px" width="16" height="16" viewBox="0 0 16 16"><path d="M1.5,10.5h13v3h-13zM6.5,3.5h3v7h-3z" fill="#fff" stroke="#111" stroke-width="1.3"/><path d="M8,0v16M0,12h16" stroke="#e03030" stroke-dasharray="2,1"/></svg>
<svg style="left:1828px;top:457px" width="16" height="16" viewBox="0 0 16 16"><path d="M2.5,14.5v-10l2-2h7l2,2v10" fill="none" stroke="#111" stroke-width="1.3"/><path d="M1,14.5h14M5,4v11M11,4v11" stroke="#111"/><path d="M4,6l8,8M12,6l-8,8" stroke="#e03030"/></svg>
<svg style="left:1828px;top:479px" width="16" height="16" viewBox="0 0 16 16"><path d="M6,1h4v3h2v4h3v5h-14v-5h3v-4h2z" fill="#dde4ec" stroke="#111" stroke-width="1.2"/><path d="M3,13v2h10v-2" fill="none" stroke="#111"/><path d="M8,0v16" stroke="#e03030" stroke-dasharray="2,1"/></svg>
<div class="a" style="left:1827px;top:341px;width:19px;height:1px;background:#a8a8a8"></div>
<svg style="left:1620px;top:145px" width="130" height="170" viewBox="1620 145 130 170"><circle cx="1685" cy="210" r="49.5" fill="none" stroke="#2c2c2c" stroke-width="11"/><rect x="1661" y="185" width="48" height="48" fill="#a2a2a2"/><rect x="1670" y="194" width="30" height="30" fill="#8e8e94"/><text x="1685" y="219" font-size="24" fill="#505050" text-anchor="middle" font-family="Liberation Sans">上</text><g font-size="16" fill="#acacac" text-anchor="middle" font-family="Liberation Sans"><text x="1685" y="165">北</text><text x="1685" y="268">南</text><text x="1633" y="216">西</text><text x="1737" y="216">东</text></g><rect x="1661.5" y="290.5" width="47" height="16" rx="4" fill="#8c8c96" stroke="#6a6a70"/><text x="1666" y="302" font-size="10" fill="#505058" font-family="Liberation Sans">WCS</text><path d="M1695,296h8l-4,4z" fill="#a8a8b0"/></svg>
<svg style="left:59px;top:791px" width="260" height="16" viewBox="0 0 260 16"><g fill="#e6e6e6" stroke="#a0a0a0"><rect x="0.5" y="0.5" width="13" height="14"/><rect x="14.5" y="0.5" width="13" height="14"/><rect x="28.5" y="0.5" width="13" height="14"/><rect x="42.5" y="0.5" width="13" height="14"/></g><g fill="#777"><rect x="4" y="3" width="1.5" height="9"/><path d="M10,3v9l-4-4.5z"/><path d="M22,3v9l-4-4.5z"/><path d="M32,3v9l4-4.5z"/><path d="M46,3v9l4-4.5z"/><rect x="50.5" y="3" width="1.5" height="9"/></g><path d="M57.5,0 L99,0 L96,15 L61.5,15 Z" fill="#000"/><path d="M102,0.5 L97,15 M148,0.5 L143,15 M194,0.5 L188,15" stroke="#8a8a8a" fill="none"/></svg>
<div class="t" style="left:126px;top:792px;font-size:12px;color:#fff;line-height:14px">模型</div>
<div class="t" style="left:166px;top:792px;font-size:12px;color:#111;line-height:14px">布局1</div>
<div class="t" style="left:212px;top:792px;font-size:12px;color:#111;line-height:14px">布局2</div>
<div class="a" style="left:1px;top:813px;width:1850px;height:81px;background:#c9c9c9"></div>
<div class="a" style="left:23px;top:872px;width:1828px;height:22px;background:#fff;border-top:1px solid #9a9a9a"></div>
<div class="a" style="left:1px;top:813px;width:22px;height:81px;background:linear-gradient(#6a6a6a,#4a4a4a 60%,#3c3c3c)"></div>
<svg style="left:1px;top:813px" width="22" height="81" viewBox="0 0 22 81"><rect x="3" y="6" width="1" height="1" fill="#bbb"/><rect x="3" y="9" width="1" height="1" fill="#bbb"/><rect x="5" y="6" width="1" height="1" fill="#bbb"/><rect x="5" y="9" width="1" height="1" fill="#bbb"/><rect x="7" y="6" width="1" height="1" fill="#bbb"/><rect x="7" y="9" width="1" height="1" fill="#bbb"/><rect x="9" y="6" width="1" height="1" fill="#bbb"/><rect x="9" y="9" width="1" height="1" fill="#bbb"/><rect x="11" y="6" width="1" height="1" fill="#bbb"/><rect x="11" y="9" width="1" height="1" fill="#bbb"/><rect x="13" y="6" width="1" height="1" fill="#bbb"/><rect x="13" y="9" width="1" height="1" fill="#bbb"/><rect x="15" y="6" width="1" height="1" fill="#bbb"/><rect x="15" y="9" width="1" height="1" fill="#bbb"/><rect x="17" y="6" width="1" height="1" fill="#bbb"/><rect x="17" y="9" width="1" height="1" fill="#bbb"/><rect x="19" y="6" width="1" height="1" fill="#bbb"/><rect x="19" y="9" width="1" height="1" fill="#bbb"/><path d="M6,15l9,9M15,15l-9,9" stroke="#fff" stroke-width="2.2"/><path d="M4,40a4,4 0 0 1 6,-2l-2,3 2,2 3-2a4,4 0 0 1 -2,6l5,5-2,2-5-5a4,4 0 0 1 -5,-9z" fill="#eee"/></svg>
<div class="t" style="left:25px;top:825px;font-family:'Liberation Mono',monospace;font-size:11.7px;color:#111;line-height:14px">Autodesk DWG</div>
<div class="t" style="left:109px;top:825px;font-family:'Liberation Mono',monospace;font-size:12px;color:#111;line-height:14px;letter-spacing:0.9px">。</div>
<div class="t" style="left:136px;top:825px;font-family:'Liberation Mono',monospace;font-size:12px;color:#111;line-height:14px;letter-spacing:0.9px">此文件上次由</div>
<div class="t" style="left:221px;top:825px;font-family:'Liberation Mono',monospace;font-size:11.7px;color:#111;line-height:14px">Autodesk</div>
<div class="t" style="left:284px;top:825px;font-family:'Liberation Mono',monospace;font-size:12px;color:#111;line-height:14px;letter-spacing:0.9px">应用程序或</div>
<div class="t" style="left:356px;top:825px;font-family:'Liberation Mono',monospace;font-size:11.7px;color:#111;line-height:14px">Autodesk</div>
<div class="t" style="left:420px;top:825px;font-family:'Liberation Mono',monospace;font-size:12px;color:#111;line-height:14px;letter-spacing:0.9px">许可的应用程序保存，是可靠的</div>
<div class="t" style="left:607px;top:825px;font-family:'Liberation Mono',monospace;font-size:11.7px;color:#111;line-height:14px">DWG</div>
<div class="t" style="left:628px;top:825px;font-family:'Liberation Mono',monospace;font-size:12px;color:#111;line-height:14px;letter-spacing:0.9px">。</div>
<div class="t" style="left:25px;top:839px;font-family:'Liberation Mono',monospace;font-size:12px;color:#111;line-height:14px;letter-spacing:0.9px">命令:</div>
<div class="t" style="left:25px;top:853px;font-family:'Liberation Mono',monospace;font-size:12px;color:#111;line-height:14px;letter-spacing:0.9px">命令:</div>
<div class="t" style="left:72px;top:853px;font-family:'Liberation Mono',monospace;font-size:12px;color:#111;line-height:14px;letter-spacing:0.2px">&lt;编组 开&gt;</div>
<svg style="left:28px;top:876px" width="26" height="15" viewBox="0 0 26 15"><rect x="0.5" y="0.5" width="14" height="14" rx="1.5" fill="#e8e8e8" stroke="#999"/><path d="M3,4l3,3-3,3" stroke="#222" fill="none"/><path d="M7,11h5" stroke="#222"/><path d="M19,6h5l-2.5,3z" fill="#888"/></svg>
<div class="t" style="left:61px;top:875px;font-size:13px;color:#9a9a9a;line-height:15px">鍵入命令</div>
<div class="a" style="left:0px;top:893px;width:1852px;height:25px;background:linear-gradient(#a2a2a2,#8e8e8e);border-top:2px solid #1e1e1e"></div>
<div class="a" style="left:0px;top:895px;width:216px;height:23px;background:linear-gradient(#a6a6a6,#8a8a8a)"></div>
<div class="t" style="left:12px;top:902px;font-family:'Liberation Mono',monospace;font-size:10px;color:#111;line-height:14px;transform:scaleY(1.12);transform-origin:0 0">1253.6502, -4.0482 , 0.0000</div>
<div class="a" style="left:216px;top:895px;width:1px;height:23px;background:#6a6a6a"></div>
<div class="a" style="left:217px;top:895px;width:22px;height:23px;background:linear-gradient(#cfcfcf,#b2b2b2);border-left:1px solid #7a7a7a"></div>
<svg style="left:220px;top:899px" width="16" height="16" viewBox="0 0 16 16"><path d="M1,6h10M6,1v12" stroke="#222" stroke-width="1.4"/><circle cx="6" cy="6" r="2" fill="none" stroke="#222"/><path d="M9,13v-4h3v2h-3" stroke="#d04010" fill="none" stroke-width="1.2"/><rect x="11" y="8" width="3" height="3" fill="#fff" stroke="#1a60d0"/><rect x="8" y="13" width="3" height="3" fill="#fff" stroke="#d04010"/></svg>
<div class="a" style="left:239px;top:895px;width:22px;height:23px;background:linear-gradient(#cfcfcf,#b2b2b2);border-left:1px solid #7a7a7a"></div>
<svg style="left:242px;top:899px" width="16" height="16" viewBox="0 0 16 16"><path d="M3,3h1M6,3h1M9,3h1M3,6h1M6,6h1M9,6h1M3,9h1M6,9h1M9,9h1" stroke="#222"/><path d="M2,12h9" stroke="#222" stroke-width="1.4"/><path d="M13,4v7M13,2v1" stroke="#222" stroke-width="1.4"/></svg>
<div class="a" style="left:261px;top:895px;width:22px;height:23px;background:linear-gradient(#cfcfcf,#b2b2b2);border-left:1px solid #7a7a7a"></div>
<svg style="left:264px;top:899px" width="16" height="16" viewBox="0 0 16 16"><rect x="1" y="1" width="14" height="14" fill="#222"/><path d="M1,4.5h14M1,8h14M1,11.5h14M4.5,1v14M8,1v14M11.5,1v14" stroke="#fff" stroke-width="1.6"/></svg>
<div class="a" style="left:283px;top:895px;width:22px;height:23px;background:linear-gradient(#cfcfcf,#b2b2b2);border-left:1px solid #7a7a7a"></div>
<svg style="left:286px;top:899px" width="16" height="16" viewBox="0 0 16 16"><path d="M2,1v14h13M2,10h5v5" fill="none" stroke="#333" stroke-width="1.2"/></svg>
<div class="a" style="left:305px;top:895px;width:22px;height:23px;background:linear-gradient(#cfcfcf,#b2b2b2);border-left:1px solid #7a7a7a"></div>
<svg style="left:308px;top:899px" width="16" height="16" viewBox="0 0 16 16"><circle cx="6" cy="10" r="4.5" fill="none" stroke="#555" stroke-width="1.3"/><path d="M5,11l9-8M5,11h10" stroke="#222" stroke-width="1.4"/></svg>
<div class="a" style="left:327px;top:895px;width:23px;height:23px;background:linear-gradient(#e4f2f8,#b4d8e8 55%,#a8d0e0);border-left:1px solid #7a7a7a"></div>
<svg style="left:331px;top:899px" width="16" height="16" viewBox="0 0 16 16"><rect x="3.5" y="3.5" width="11" height="11" fill="#eef0f2" stroke="#333" stroke-width="1.2"/><circle cx="3" cy="3" r="2" fill="#fff" stroke="#e05010" stroke-width="1.2"/></svg>
<div class="a" style="left:350px;top:895px;width:22px;height:23px;background:linear-gradient(#cfcfcf,#b2b2b2);border-left:1px solid #7a7a7a"></div>
<svg style="left:354px;top:899px" width="16" height="16" viewBox="0 0 16 16"><path d="M2.5,5.5l3-3h10v9l-3,3h-10z" fill="#e8eaec" stroke="#333" stroke-width="1.2"/><path d="M2.5,5.5h10v9M12.5,5.5l3-3" fill="none" stroke="#333"/><circle cx="3" cy="14" r="2" fill="#fff" stroke="#e05010" stroke-width="1.2"/></svg>
<div class="a" style="left:372px;top:895px;width:22px;height:23px;background:linear-gradient(#e4f2f8,#b4d8e8 55%,#a8d0e0);border-left:1px solid #7a7a7a"></div>
<svg style="left:376px;top:899px" width="16" height="16" viewBox="0 0 16 16"><path d="M3,13l9-9M3,13h11" stroke="#222" stroke-width="1.5"/></svg>
<div class="a" style="left:394px;top:895px;width:22px;height:23px;background:linear-gradient(#e4f2f8,#b4d8e8 55%,#a8d0e0);border-left:1px solid #7a7a7a"></div>
<svg style="left:398px;top:899px" width="16" height="16" viewBox="0 0 16 16"><path d="M3,1v14h12M3,14l9-9" fill="none" stroke="#222" stroke-width="1.2"/><path d="M10,1l-2,4h3l-1,4" stroke="#f0a010" stroke-width="1.5" fill="none"/></svg>
<div class="a" style="left:416px;top:895px;width:22px;height:23px;background:linear-gradient(#e4f2f8,#b4d8e8 55%,#a8d0e0);border-left:1px solid #7a7a7a"></div>
<svg style="left:420px;top:899px" width="16" height="16" viewBox="0 0 16 16"><path d="M1,8h14M5,3v10" stroke="#111" stroke-width="1.5"/><rect x="8.5" y="9.5" width="6" height="4" fill="#fff" stroke="#111"/></svg>
<div class="a" style="left:438px;top:895px;width:22px;height:23px;background:linear-gradient(#cfcfcf,#b2b2b2);border-left:1px solid #7a7a7a"></div>
<svg style="left:442px;top:899px" width="16" height="16" viewBox="0 0 16 16"><path d="M1,8h14M8,1v14" stroke="#111" stroke-width="2.2"/></svg>
<div class="a" style="left:460px;top:895px;width:22px;height:23px;background:linear-gradient(#e4f2f8,#b4d8e8 55%,#a8d0e0);border-left:1px solid #7a7a7a"></div>
<svg style="left:464px;top:899px" width="16" height="16" viewBox="0 0 16 16"><rect x="1.5" y="1.5" width="13" height="13" fill="#8ab8e8" stroke="#1a60d0" stroke-width="1.5"/><path d="M2,2l12,12M2,6l8,8M6,2l8,8M2,10l4,4M10,2l4,4M14,2l-12,12M10,2l-8,8M14,6l-8,8M6,2l-4,4M14,10l-4,4" stroke="#c8e0f8" stroke-width=".8"/></svg>
<div class="a" style="left:482px;top:895px;width:22px;height:23px;background:linear-gradient(#cfcfcf,#b2b2b2);border-left:1px solid #7a7a7a"></div>
<svg style="left:486px;top:899px" width="16" height="16" viewBox="0 0 16 16"><rect x="3.5" y="1.5" width="9" height="13" rx="1" fill="#fff" stroke="#111" stroke-width="1.3"/><path d="M5.5,4h5M5.5,7h1M8,7h1M10,7h1M5.5,9.5h1M8,9.5h1M10,9.5h1M5.5,12h1M8,12h1M10,12h1" stroke="#111"/></svg>
<div class="a" style="left:504px;top:895px;width:22px;height:23px;background:linear-gradient(#cfcfcf,#b2b2b2);border-left:1px solid #7a7a7a"></div>
<svg style="left:508px;top:899px" width="16" height="16" viewBox="0 0 16 16"><path d="M1,4h6M4,1v6" stroke="#222" stroke-width="1.2"/><rect x="4.5" y="6.5" width="7" height="7" fill="#fff" stroke="#333"/><rect x="8" y="9" width="7" height="7" fill="#5ab040" stroke="#2a6020"/></svg>
<div class="a" style="left:526px;top:895px;width:22px;height:23px;background:linear-gradient(#cfcfcf,#b2b2b2);border-left:1px solid #7a7a7a"></div>
<svg style="left:530px;top:899px" width="16" height="16" viewBox="0 0 16 16"><path d="M5.5,1.5h5v4h4v5h-4v4h-5v-4h-4v-5h4z" fill="#f0f0f0" stroke="#444" stroke-width="1.2"/></svg>
<div class="a" style="left:548px;top:895px;width:1px;height:23px;background:#6a6a6a"></div>
<div class="a" style="left:1483px;top:895px;width:31px;height:23px;background:linear-gradient(#cfcfcf,#b2b2b2);border-left:1px solid #7a7a7a;border-right:1px solid #7a7a7a"></div>
<div class="t" style="left:1486px;top:899px;font-size:13px;color:#111;line-height:15px">模型</div>
<div class="a" style="left:1514px;top:895px;width:22px;height:23px;background:linear-gradient(#cfcfcf,#b2b2b2);border-left:1px solid #7a7a7a"></div>
<svg style="left:1518px;top:899px" width="16" height="16" viewBox="0 0 16 16"><rect x="2.5" y="1.5" width="12" height="11" fill="#f4f4f4" stroke="#333"/><path d="M5,10v-6l5,6z" fill="none" stroke="#333"/><path d="M1,15h15" stroke="#555" stroke-width="2"/></svg>
<div class="a" style="left:1536px;top:895px;width:22px;height:23px;background:linear-gradient(#cfcfcf,#b2b2b2);border-left:1px solid #7a7a7a"></div>
<svg style="left:1540px;top:899px" width="16" height="16" viewBox="0 0 16 16"><rect x="1.5" y="1.5" width="6" height="6" fill="#fff" stroke="#333"/><rect x="9.5" y="1.5" width="6" height="6" fill="#fff" stroke="#333"/><path d="M1,12h15" stroke="#555" stroke-width="2.5"/></svg>
<div class="a" style="left:1558px;top:895px;width:1px;height:23px;background:#6a6a6a"></div>
<div class="a" style="left:1575px;top:895px;width:54px;height:23px;background:linear-gradient(#cfcfcf,#b2b2b2);border-left:1px solid #7a7a7a"></div>
<svg style="left:1578px;top:899px" width="16" height="16" viewBox="0 0 16 16"><path d="M8,1l1,7 6,6-2,1-5-4-5,4-2-1 6-6z" fill="#fff" stroke="#333"/></svg>
<div class="t" style="left:1597px;top:899px;font-size:13px;color:#111;line-height:15px">1:1</div>
<svg style="left:1616px;top:902px" width="9" height="5"><path d="M0,0h9l-4.5,5z" fill="#111"/></svg>
<div class="a" style="left:1629px;top:895px;width:22px;height:23px;background:linear-gradient(#cfcfcf,#b2b2b2);border-left:1px solid #7a7a7a"></div>
<svg style="left:1632px;top:899px" width="16" height="16" viewBox="0 0 16 16"><path d="M8,1l1,7 6,6-2,1-5-4-5,4-2-1 6-6z" fill="#fff" stroke="#333"/><circle cx="12" cy="11" r="3" fill="#f8c030" stroke="#a06010"/></svg>
<div class="a" style="left:1651px;top:895px;width:22px;height:23px;background:linear-gradient(#cfcfcf,#b2b2b2);border-left:1px solid #7a7a7a"></div>
<svg style="left:1654px;top:899px" width="16" height="16" viewBox="0 0 16 16"><path d="M8,1l1,7 6,6-2,1-5-4-5,4-2-1 6-6z" fill="#ccc" stroke="#999"/></svg>
<div class="a" style="left:1673px;top:895px;width:1px;height:23px;background:#6a6a6a"></div>
<div class="a" style="left:1679px;top:895px;width:1px;height:23px;background:#6a6a6a"></div>
<div class="a" style="left:1680px;top:895px;width:22px;height:23px;background:linear-gradient(#cfcfcf,#b2b2b2);border-left:1px solid #7a7a7a"></div>
<svg style="left:1684px;top:899px" width="16" height="16" viewBox="0 0 16 16"><circle cx="8" cy="8" r="6" fill="none" stroke="#333" stroke-width="2.5" stroke-dasharray="2.4,1.3"/><circle cx="8" cy="8" r="4.5" fill="#f0f0f0" stroke="#333"/><circle cx="8" cy="8" r="2" fill="#fff" stroke="#333"/><path d="M12,16l4-4v4z" fill="#111"/></svg>
<div class="a" style="left:1702px;top:895px;width:22px;height:23px;background:linear-gradient(#cfcfcf,#b2b2b2);border-left:1px solid #7a7a7a"></div>
<svg style="left:1706px;top:899px" width="16" height="16" viewBox="0 0 16 16"><path d="M9,8v-4a3,3 0 0 1 6,0v2" fill="none" stroke="#333" stroke-width="1.6"/><rect x="1.5" y="8.5" width="10" height="7" fill="#f4f4f4" stroke="#333"/><rect x="6" y="10" width="1.5" height="4" fill="#333"/></svg>
<div class="a" style="left:1724px;top:895px;width:22px;height:23px;background:linear-gradient(#cfcfcf,#b2b2b2);border-left:1px solid #7a7a7a"></div>
<svg style="left:1728px;top:899px" width="16" height="16" viewBox="0 0 16 16"><circle cx="8" cy="9" r="6.5" fill="#9a9a9a" stroke="#777"/><path d="M8,9l3-5" stroke="#fff" stroke-width="1.5"/><path d="M3,6l1,1M13,6l-1,1M8,3v1" stroke="#eee"/></svg>
<div class="a" style="left:1746px;top:895px;width:64px;height:23px;background:linear-gradient(#8a8a8a,#7a7a7a);border-left:1px solid #555"></div>
<div class="a" style="left:1748px;top:897px;width:58px;height:19px;background:linear-gradient(#c4c4c4,#a8a8a8);border:1px solid #666"></div>
<svg style="left:1750px;top:899px" width="16" height="16" viewBox="0 0 16 16"><path d="M2,5q3-4 7-2l-3,3" fill="none" stroke="#111" stroke-width="1.6"/><path d="M3,5h10" stroke="#1a40c0" stroke-width="2"/><path d="M7,5v10M7,14h8" stroke="#c01010" stroke-width="2"/><circle cx="12" cy="5" r="2" fill="#c01010"/></svg>
<svg style="left:1771px;top:899px" width="16" height="16" viewBox="0 0 16 16"><rect x="1.5" y="2.5" width="11" height="9" fill="#7aa8d8" stroke="#333"/><path d="M1,10h9v5h-9z" fill="#f0d040"/><path d="M7,12l3,3 5-6" stroke="#30a030" stroke-width="2" fill="none"/></svg>
<svg style="left:1792px;top:899px" width="16" height="16" viewBox="0 0 16 16"><path d="M8,1a5,5 0 0 1 3,9v2h-6v-2a5,5 0 0 1 3,-9z" fill="#f8e090" stroke="#8a7020"/><rect x="5.5" y="12" width="5" height="3" fill="#bbb" stroke="#666"/></svg>
<div class="a" style="left:1810px;top:895px;width:1px;height:23px;background:#555"></div>
<div class="a" style="left:1811px;top:895px;width:16px;height:23px;background:linear-gradient(#cfcfcf,#b2b2b2);border-left:1px solid #7a7a7a"></div>
<svg style="left:1814px;top:905px" width="9" height="5"><path d="M0,0h9l-4.5,5z" fill="#111"/></svg>
<div class="a" style="left:1827px;top:895px;width:25px;height:23px;background:linear-gradient(#cfcfcf,#b2b2b2);border-left:1px solid #7a7a7a"></div>
<svg style="left:1832px;top:899px" width="16" height="16" viewBox="0 0 16 16"><path d="M2,2h14v3h-14z" fill="#fff" stroke="#333"/><rect x="1.5" y="1.5" width="14" height="13" fill="#fff" stroke="#333"/><path d="M1.5,4.5h14" stroke="#333"/><path d="M10,3h1M12,3h1M14,3h1" stroke="#333"/></svg>
<svg style="left:59px;top:133px" width="1703" height="658" viewBox="59 133 1703 658" shape-rendering="crispEdges">
<defs><pattern id="hat" patternUnits="userSpaceOnUse" width="6" height="6"><line x1="0" y1="6" x2="6" y2="0" stroke="#00ff00" stroke-width="1"/></pattern></defs>
<g stroke-width="1">
<rect x="208.5" y="136.5" width="920" height="651" fill="none" stroke="#00ffff"/>
<rect x="247.5" y="152.5" width="866" height="619" fill="none" stroke="#ffffff"/>
<line x1="438.5" y1="136" x2="438.5" y2="153" stroke="#00ffff"/>
<line x1="438.5" y1="771" x2="438.5" y2="788" stroke="#00ffff"/>
<line x1="668.5" y1="136" x2="668.5" y2="153" stroke="#00ffff"/>
<line x1="668.5" y1="771" x2="668.5" y2="788" stroke="#00ffff"/>
<line x1="898.5" y1="136" x2="898.5" y2="153" stroke="#00ffff"/>
<line x1="898.5" y1="771" x2="898.5" y2="788" stroke="#00ffff"/>
<line x1="668.5" y1="152" x2="668.5" y2="159" stroke="#ffffff"/>
<line x1="668.5" y1="765" x2="668.5" y2="772" stroke="#ffffff"/>
<line x1="208" y1="299.5" x2="248" y2="299.5" stroke="#00ffff"/>
<line x1="1113" y1="299.5" x2="1129" y2="299.5" stroke="#00ffff"/>
<line x1="208" y1="624.5" x2="248" y2="624.5" stroke="#00ffff"/>
<line x1="1113" y1="624.5" x2="1129" y2="624.5" stroke="#00ffff"/>
<line x1="208" y1="461.5" x2="256" y2="461.5" stroke="#00ffff"/>
<line x1="1105" y1="461.5" x2="1129" y2="461.5" stroke="#00ffff"/>
<line x1="247" y1="461.5" x2="256" y2="461.5" stroke="#ffffff"/>
<text x="323" y="148" font-size="10" fill="#00ff00" text-anchor="middle" font-family="Liberation Sans" >1</text>
<text x="323" y="783" font-size="10" fill="#00ff00" text-anchor="middle" font-family="Liberation Sans" >1</text>
<text x="553" y="148" font-size="10" fill="#00ff00" text-anchor="middle" font-family="Liberation Sans" >2</text>
<text x="553" y="783" font-size="10" fill="#00ff00" text-anchor="middle" font-family="Liberation Sans" >2</text>
<text x="783" y="148" font-size="10" fill="#00ff00" text-anchor="middle" font-family="Liberation Sans" >3</text>
<text x="783" y="783" font-size="10" fill="#00ff00" text-anchor="middle" font-family="Liberation Sans" >3</text>
<text x="1013" y="148" font-size="10" fill="#00ff00" text-anchor="middle" font-family="Liberation Sans" >4</text>
<text x="1013" y="783" font-size="10" fill="#00ff00" text-anchor="middle" font-family="Liberation Sans" >4</text>
<text x="228" y="221" font-size="10" fill="#00ff00" text-anchor="middle" font-family="Liberation Sans" >A</text>
<text x="1121" y="221" font-size="10" fill="#00ff00" text-anchor="middle" font-family="Liberation Sans" >A</text>
<text x="228" y="384" font-size="10" fill="#00ff00" text-anchor="middle" font-family="Liberation Sans" >B</text>
<text x="1121" y="384" font-size="10" fill="#00ff00" text-anchor="middle" font-family="Liberation Sans" >B</text>
<text x="228" y="547" font-size="10" fill="#00ff00" text-anchor="middle" font-family="Liberation Sans" >C</text>
<text x="1121" y="547" font-size="10" fill="#00ff00" text-anchor="middle" font-family="Liberation Sans" >C</text>
<text x="228" y="710" font-size="10" fill="#00ff00" text-anchor="middle" font-family="Liberation Sans" >D</text>
<text x="1121" y="710" font-size="10" fill="#00ff00" text-anchor="middle" font-family="Liberation Sans" >D</text>
<line x1="247" y1="170.5" x2="341" y2="170.5" stroke="#00ffff"/>
<line x1="340.5" y1="152" x2="340.5" y2="171" stroke="#00ffff"/>
<text x="295" y="167" font-size="15" fill="#00ff00" text-anchor="middle" font-family="Liberation Sans" textLength="29" lengthAdjust="spacingAndGlyphs" transform="rotate(180 295 161)">0-70</text>
<line x1="380.5" y1="402.5" x2="792.5" y2="402.5" stroke="#ff0000" stroke-dasharray="14,3,3,3"/>
<rect x="389.5" y="393.5" width="28" height="17" fill="none" stroke="#ffffff"/>
<line x1="389" y1="400.5" x2="417" y2="400.5" stroke="#ffffff"/>
<line x1="389" y1="405.5" x2="417" y2="405.5" stroke="#ffffff"/>
<polyline points="407.5,398.5 413.5,398.5 416.5,402.5 413.5,406.5 407.5,406.5" fill="none" stroke="#ff0000"/>
<rect x="417.5" y="390.5" width="3" height="23" fill="none" stroke="#ffffff"/>
<rect x="420.5" y="375.5" width="24" height="53" fill="none" stroke="#ffffff"/>
<polyline points="444.5,402.5 444.5,349.5 449.5,344.5 549.5,344.5 557.5,336.5 584.5,336.5 584.5,468.5 557.5,468.5 549.5,460.5 449.5,460.5 444.5,455.5 444.5,428.5" fill="none" stroke="#ffffff"/>
<line x1="448.5" y1="349" x2="448.5" y2="403" stroke="#ffffff"/>
<line x1="549.5" y1="344" x2="549.5" y2="403" stroke="#ffffff"/>
<line x1="557.5" y1="336" x2="557.5" y2="403" stroke="#ffffff"/>
<line x1="576.5" y1="336" x2="576.5" y2="469" stroke="#ffffff"/>
<line x1="456.5" y1="402" x2="456.5" y2="453" stroke="#ffffff"/>
<line x1="456" y1="452.5" x2="573" y2="452.5" stroke="#ffffff"/>
<line x1="456" y1="446.5" x2="567" y2="446.5" stroke="#ffffff"/>
<line x1="566.5" y1="402" x2="566.5" y2="447" stroke="#ffffff"/>
<line x1="569.5" y1="402" x2="569.5" y2="453" stroke="#ffffff"/>
<line x1="572.5" y1="402" x2="572.5" y2="453" stroke="#ffffff"/>
<path d="M444.5,428.5 L456.5,428.5 L456.5,452.5 L572.5,452.5 L572.5,420.5 L584.5,420.5 L584.5,468.5 L557.5,468.5 L549.5,460.5 L449.5,460.5 L444.5,455.5 Z" fill="url(#hat)" stroke="none"/>
<polyline points="444.5,428.5 456.5,428.5" fill="none" stroke="#ffffff"/>
<rect x="441.5" y="309.5" width="116" height="9" fill="none" stroke="#ffffff"/>
<rect x="460.5" y="318.5" width="6" height="26" fill="none" stroke="#ffffff"/>
<line x1="460" y1="327.5" x2="467" y2="327.5" stroke="#ffffff"/>
<rect x="531.5" y="318.5" width="6" height="26" fill="none" stroke="#ffffff"/>
<line x1="531" y1="327.5" x2="538" y2="327.5" stroke="#ffffff"/>
<line x1="448.5" y1="300" x2="448.5" y2="327" stroke="#ff0000"/>
<line x1="541.5" y1="298" x2="541.5" y2="327" stroke="#ff0000"/>
<line x1="441" y1="363.5" x2="469" y2="363.5" stroke="#ff0000"/>
<line x1="441" y1="440.5" x2="461" y2="440.5" stroke="#ff0000"/>
<line x1="465" y1="440.5" x2="477" y2="440.5" stroke="#ff0000"/>
<line x1="557.5" y1="344.5" x2="598.5" y2="344.5" stroke="#ff0000" stroke-dasharray="10,3,3,3"/>
<line x1="557.5" y1="460.5" x2="590.5" y2="460.5" stroke="#ff0000" stroke-dasharray="10,3,3,3"/>
<polyline points="584.5,355.5 594.5,355.5 617.5,367.5" fill="none" stroke="#ffffff"/>
<polyline points="584.5,448.5 595.5,448.5 617.5,437.5" fill="none" stroke="#ffffff"/>
<line x1="586" y1="380.5" x2="618" y2="380.5" stroke="#ffffff"/>
<line x1="586" y1="423.5" x2="618" y2="423.5" stroke="#ffffff"/>
<rect x="617.5" y="367.5" width="8" height="70" fill="none" stroke="#ffffff"/>
<line x1="628.5" y1="367" x2="628.5" y2="438" stroke="#ffffff"/>
<line x1="606" y1="371.5" x2="637" y2="371.5" stroke="#ff0000"/>
<line x1="606" y1="433.5" x2="637" y2="433.5" stroke="#ff0000"/>
<path d="M575.5,406.5 L622.5,406.5 L622.5,422.5 L577.5,422.5 Z" fill="url(#hat)" stroke="none"/>
<rect x="575.5" y="406.5" width="47" height="6" fill="none" stroke="#ffffff"/>
<line x1="577" y1="422.5" x2="623" y2="422.5" stroke="#ffffff"/>
<line x1="584" y1="403.5" x2="641" y2="403.5" stroke="#ffffff"/>
<path d="M628.5,367.5 Q630.5,357.5 640.5,357.5 M628.5,437.5 Q630.5,446.5 640.5,446.5" fill="none" stroke="#fff"/>
<rect x="640.5" y="351.5" width="103" height="101" fill="none" stroke="#ffffff"/>
<polyline points="743.5,351.5 765.5,357.5 783.5,366.5 783.5,437.5 765.5,446.5 743.5,452.5" fill="none" stroke="#ffffff"/>
<line x1="417" y1="284.5" x2="449" y2="284.5" stroke="#00ffff"/>
<line x1="417.5" y1="281" x2="417.5" y2="394" stroke="#00ffff"/>
<line x1="448.5" y1="281" x2="448.5" y2="301" stroke="#00ffff"/>
<text x="432" y="282" font-size="7" fill="#00ff00" text-anchor="middle" font-family="Liberation Sans" >42</text>
<line x1="389" y1="366.5" x2="417" y2="366.5" stroke="#00ffff"/>
<line x1="389.5" y1="363" x2="389.5" y2="394" stroke="#00ffff"/>
<text x="402" y="363" font-size="7" fill="#00ff00" text-anchor="middle" font-family="Liberation Sans" >35</text>
<line x1="507.5" y1="310" x2="507.5" y2="403" stroke="#00ffff"/>
<text x="503" y="356" font-size="7" fill="#00ff00" text-anchor="middle" font-family="Liberation Sans" transform="rotate(-90 503 356)">120</text>
<line x1="400.5" y1="393" x2="400.5" y2="457" stroke="#00ffff"/>
<text x="395" y="432" font-size="6.5" fill="#00ff00" text-anchor="middle" font-family="Liberation Sans" transform="rotate(-90 395 432)">Φ25h8(-0.033)</text>
<polyline points="406.5,403.5 418.5,478.5 451.5,478.5" fill="none" stroke="#00ffff"/>
<text x="434" y="476" font-size="7" fill="#00ff00" text-anchor="middle" font-family="Liberation Sans" >M6x32</text>
<polyline points="405.5,263.5 423.5,263.5 445.5,355.5" fill="none" stroke="#00ffff"/>
<text x="413" y="261" font-size="11.5" fill="#00ff00" text-anchor="middle" font-family="Liberation Sans" >1</text>
<circle cx="445.5" cy="355.5" r="1.2" fill="#00ffff"/>
<line x1="573" y1="263.5" x2="593" y2="263.5" stroke="#00ffff"/>
<line x1="573.5" y1="263.5" x2="541.5" y2="313.5" stroke="#00ffff"/>
<text x="582" y="261" font-size="11.5" fill="#00ff00" text-anchor="middle" font-family="Liberation Sans" >2</text>
<circle cx="541.5" cy="313.5" r="1.2" fill="#00ffff"/>
<line x1="624" y1="263.5" x2="644" y2="263.5" stroke="#00ffff"/>
<line x1="624.5" y1="263.5" x2="591.5" y2="344.5" stroke="#00ffff"/>
<text x="633" y="261" font-size="11.5" fill="#00ff00" text-anchor="middle" font-family="Liberation Sans" >3</text>
<circle cx="591.5" cy="344.5" r="1.2" fill="#00ffff"/>
<line x1="694" y1="263.5" x2="714" y2="263.5" stroke="#00ffff"/>
<line x1="694.5" y1="263.5" x2="600.5" y2="370.5" stroke="#00ffff"/>
<text x="703" y="261" font-size="11.5" fill="#00ff00" text-anchor="middle" font-family="Liberation Sans" >4</text>
<circle cx="600.5" cy="370.5" r="1.2" fill="#00ffff"/>
<line x1="765" y1="263.5" x2="785" y2="263.5" stroke="#00ffff"/>
<line x1="765.5" y1="263.5" x2="698.5" y2="367.5" stroke="#00ffff"/>
<text x="774" y="261" font-size="11.5" fill="#00ff00" text-anchor="middle" font-family="Liberation Sans" >5</text>
<circle cx="698.5" cy="367.5" r="1.2" fill="#00ffff"/>
<polyline points="594.5,410.5 633.5,503.5 652.5,503.5" fill="none" stroke="#00ffff"/>
<text x="642" y="500" font-size="11.5" fill="#00ff00" text-anchor="middle" font-family="Liberation Sans" >8</text>
<polyline points="657.5,505.5 660.5,510.5 663.5,503.5 681.5,503.5" fill="none" stroke="#00ffff"/>
<text x="671" y="500" font-size="11.5" fill="#00ff00" text-anchor="middle" font-family="Liberation Sans" >9</text>
<polyline points="631.5,431.5 726.5,503.5 745.5,503.5" fill="none" stroke="#00ffff"/>
<text x="735" y="500" font-size="11.5" fill="#00ff00" text-anchor="middle" font-family="Liberation Sans" >6</text>
<polyline points="750.5,505.5 753.5,510.5 756.5,503.5 774.5,503.5" fill="none" stroke="#00ffff"/>
<text x="765" y="500" font-size="11.5" fill="#00ff00" text-anchor="middle" font-family="Liberation Sans" >7</text>
<text x="497" y="280" font-size="9" fill="#00ff00" text-anchor="middle" font-family="Liberation Sans" >A</text>
<line x1="497.5" y1="288" x2="497.5" y2="300" stroke="#00ff00"/>
<polygon points="495.5,291 499.5,291 497.5,297" fill="#00ff00"/>
<path d="M853.5,358.5 A66,66 0 1 0 947.5,351.5" fill="none" stroke="#fff"/>
<circle cx="903.5" cy="402.5" r="59" fill="none" stroke="#ffffff"/>
<circle cx="903.5" cy="402.5" r="55" fill="none" stroke="#ffffff"/>
<circle cx="903.5" cy="402.5" r="38" fill="none" stroke="#ff0000" stroke-dasharray="12,4"/>
<circle cx="903.5" cy="402.5" r="26" fill="none" stroke="#ffffff"/>
<circle cx="903.5" cy="402.5" r="10.5" fill="none" stroke="#ffffff"/>
<circle cx="903.5" cy="402.5" r="8" fill="none" stroke="#ffffff"/>
<rect x="906.5" y="399.5" width="6" height="6" fill="none" stroke="#ffffff"/>
<rect x="821.5" y="309.5" width="140" height="9" fill="none" stroke="#ffffff"/>
<polyline points="821.5,318.5 821.5,326.5 860.5,362.5" fill="none" stroke="#ffffff"/>
<polyline points="961.5,318.5 961.5,326.5 940.5,352.5" fill="none" stroke="#ffffff"/>
<line x1="838.5" y1="304" x2="838.5" y2="323" stroke="#ff0000"/>
<line x1="946.5" y1="304" x2="946.5" y2="323" stroke="#ff0000"/>
<line x1="903.5" y1="290.5" x2="903.5" y2="482.5" stroke="#ff0000" stroke-dasharray="14,3,3,3"/>
<line x1="823.5" y1="402.5" x2="985.5" y2="402.5" stroke="#ff0000" stroke-dasharray="14,3,3,3"/>
<line x1="900" y1="364.5" x2="907" y2="364.5" stroke="#ffffff"/>
<line x1="903.5" y1="361" x2="903.5" y2="368" stroke="#ffffff"/>
<line x1="862" y1="402.5" x2="869" y2="402.5" stroke="#ffffff"/>
<line x1="865.5" y1="399" x2="865.5" y2="406" stroke="#ffffff"/>
<line x1="938" y1="402.5" x2="945" y2="402.5" stroke="#ffffff"/>
<line x1="941.5" y1="399" x2="941.5" y2="406" stroke="#ffffff"/>
<line x1="900" y1="440.5" x2="907" y2="440.5" stroke="#ffffff"/>
<line x1="903.5" y1="437" x2="903.5" y2="444" stroke="#ffffff"/>
<line x1="903" y1="285.5" x2="962" y2="285.5" stroke="#00ffff"/>
<line x1="903.5" y1="281" x2="903.5" y2="291" stroke="#00ffff"/>
<line x1="961.5" y1="281" x2="961.5" y2="310" stroke="#00ffff"/>
<text x="932" y="283" font-size="7" fill="#00ff00" text-anchor="middle" font-family="Liberation Sans" >76</text>
<rect x="418.5" y="529.5" width="116" height="140" fill="none" stroke="#ffffff"/>
<circle cx="426.5" cy="545.5" r="3.5" fill="none" stroke="#ffffff"/>
<circle cx="527.5" cy="545.5" r="3.5" fill="none" stroke="#ffffff"/>
<circle cx="426.5" cy="653.5" r="3.5" fill="none" stroke="#ffffff"/>
<circle cx="527.5" cy="653.5" r="3.5" fill="none" stroke="#ffffff"/>
<line x1="418.5" y1="545.5" x2="534.5" y2="545.5" stroke="#ff0000" stroke-dasharray="8,3"/>
<line x1="418.5" y1="653.5" x2="534.5" y2="653.5" stroke="#ff0000" stroke-dasharray="8,3"/>
<line x1="426.5" y1="529.5" x2="426.5" y2="669.5" stroke="#ff0000" stroke-dasharray="8,3"/>
<line x1="527.5" y1="529.5" x2="527.5" y2="669.5" stroke="#ff0000" stroke-dasharray="8,3"/>
<line x1="477.5" y1="520.5" x2="477.5" y2="676.5" stroke="#ff0000" stroke-dasharray="10,3,3,3"/>
<line x1="409.5" y1="599.5" x2="540.5" y2="599.5" stroke="#ff0000" stroke-dasharray="10,3,3,3"/>
<line x1="418" y1="519.5" x2="535" y2="519.5" stroke="#00ffff"/>
<line x1="418.5" y1="516" x2="418.5" y2="530" stroke="#00ffff"/>
<line x1="534.5" y1="516" x2="534.5" y2="530" stroke="#00ffff"/>
<text x="477" y="517" font-size="7" fill="#00ff00" text-anchor="middle" font-family="Liberation Sans" >150</text>
<line x1="426" y1="568.5" x2="528" y2="568.5" stroke="#00ffff"/>
<line x1="426.5" y1="545" x2="426.5" y2="572" stroke="#00ffff"/>
<line x1="527.5" y1="545" x2="527.5" y2="572" stroke="#00ffff"/>
<text x="487" y="566" font-size="7" fill="#00ff00" text-anchor="middle" font-family="Liberation Sans" >130</text>
<line x1="534" y1="545.5" x2="558" y2="545.5" stroke="#00ffff"/>
<line x1="534" y1="653.5" x2="558" y2="653.5" stroke="#00ffff"/>
<line x1="554.5" y1="545" x2="554.5" y2="654" stroke="#00ffff"/>
<text x="550" y="599" font-size="7" fill="#00ff00" text-anchor="middle" font-family="Liberation Sans" transform="rotate(-90 550 599)">140</text>
<line x1="534" y1="529.5" x2="575" y2="529.5" stroke="#00ffff"/>
<line x1="534" y1="669.5" x2="575" y2="669.5" stroke="#00ffff"/>
<line x1="571.5" y1="529" x2="571.5" y2="670" stroke="#00ffff"/>
<text x="566" y="599" font-size="7" fill="#00ff00" text-anchor="middle" font-family="Liberation Sans" transform="rotate(-90 566 599)">180</text>
<text x="477" y="499" font-size="8" fill="#00ffff" text-anchor="middle" font-family="Liberation Sans" >A向</text>
<polyline points="426.5,545.5 406.5,568.5 378.5,568.5" fill="none" stroke="#00ffff"/>
<text x="392" y="566" font-size="7" fill="#00ffff" text-anchor="middle" font-family="Liberation Sans" >4-Φ8.5</text>
<text x="596" y="620" font-size="9" fill="#00ff00" text-anchor="start" font-family="Liberation Sans" >9⁴ 件装配后按502腻防松</text>
<line x1="834" y1="572.5" x2="1114" y2="572.5" stroke="#00ffff"/>
<line x1="834" y1="584.5" x2="1114" y2="584.5" stroke="#00ffff"/>
<line x1="834" y1="597.5" x2="1114" y2="597.5" stroke="#00ffff"/>
<line x1="834" y1="609.5" x2="1114" y2="609.5" stroke="#00ffff"/>
<line x1="834" y1="621.5" x2="1114" y2="621.5" stroke="#00ffff"/>
<line x1="834" y1="634.5" x2="1114" y2="634.5" stroke="#00ffff"/>
<line x1="834" y1="646.5" x2="1114" y2="646.5" stroke="#00ffff"/>
<line x1="834" y1="658.5" x2="1114" y2="658.5" stroke="#00ffff"/>
<line x1="834" y1="671.5" x2="1114" y2="671.5" stroke="#00ffff"/>
<line x1="834" y1="683.5" x2="1114" y2="683.5" stroke="#00ffff"/>
<line x1="834.5" y1="572" x2="834.5" y2="703" stroke="#00ffff"/>
<line x1="851.5" y1="572" x2="851.5" y2="703" stroke="#00ffff"/>
<line x1="908.5" y1="572" x2="908.5" y2="703" stroke="#00ffff"/>
<line x1="960.5" y1="572" x2="960.5" y2="703" stroke="#00ffff"/>
<line x1="976.5" y1="572" x2="976.5" y2="703" stroke="#00ffff"/>
<line x1="1031.5" y1="572" x2="1031.5" y2="703" stroke="#00ffff"/>
<line x1="1048.5" y1="572" x2="1048.5" y2="703" stroke="#00ffff"/>
<line x1="1066.5" y1="572" x2="1066.5" y2="703" stroke="#00ffff"/>
<line x1="1031" y1="692.5" x2="1067" y2="692.5" stroke="#00ffff"/>
<text x="843" y="582" font-size="10" fill="#00ff00" text-anchor="middle" font-family="Liberation Sans" >9</text>
<text x="853" y="582" font-size="10" fill="#00ff00" text-anchor="start" font-family="Liberation Sans" >GB71-85</text>
<text x="910" y="582" font-size="8" fill="#00ff00" text-anchor="start" font-family="Liberation Sans" font-weight="bold" textLength="22" lengthAdjust="spacingAndGlyphs">紧定螺钉</text>
<text x="968" y="582" font-size="10" fill="#00ff00" text-anchor="middle" font-family="Liberation Sans" >1</text>
<text x="1003" y="582" font-size="10" fill="#00ff00" text-anchor="middle" font-family="Liberation Sans" >45</text>
<text x="1040" y="582" font-size="10" fill="#00ff00" text-anchor="middle" font-family="Liberation Sans" >0.5</text>
<text x="1057" y="582" font-size="10" fill="#00ff00" text-anchor="middle" font-family="Liberation Sans" >0.5</text>
<text x="843" y="595" font-size="10" fill="#00ff00" text-anchor="middle" font-family="Liberation Sans" >8</text>
<text x="853" y="595" font-size="10" fill="#00ff00" text-anchor="start" font-family="Liberation Sans" >0-73</text>
<text x="910" y="595" font-size="8" fill="#00ff00" text-anchor="start" font-family="Liberation Sans" font-weight="bold" textLength="16" lengthAdjust="spacingAndGlyphs">传动轴</text>
<text x="968" y="595" font-size="10" fill="#00ff00" text-anchor="middle" font-family="Liberation Sans" >1</text>
<text x="1003" y="595" font-size="10" fill="#00ff00" text-anchor="middle" font-family="Liberation Sans" >45</text>
<text x="1040" y="595" font-size="10" fill="#00ff00" text-anchor="middle" font-family="Liberation Sans" >12</text>
<text x="1057" y="595" font-size="10" fill="#00ff00" text-anchor="middle" font-family="Liberation Sans" >12</text>
<text x="1090" y="595" font-size="8" fill="#00ff00" text-anchor="middle" font-family="Liberation Sans" font-weight="bold">借用</text>
<text x="843" y="607" font-size="10" fill="#00ff00" text-anchor="middle" font-family="Liberation Sans" >7</text>
<text x="853" y="607" font-size="10" fill="#00ff00" text-anchor="start" font-family="Liberation Sans" >GB97.2-85</text>
<text x="910" y="607" font-size="8" fill="#00ff00" text-anchor="start" font-family="Liberation Sans" font-weight="bold" textLength="48" lengthAdjust="spacingAndGlyphs">垫圈5-140HV-Zn.D</text>
<text x="968" y="607" font-size="10" fill="#00ff00" text-anchor="middle" font-family="Liberation Sans" >4</text>
<text x="1003" y="607" font-size="10" fill="#00ff00" text-anchor="middle" font-family="Liberation Sans" >45</text>
<text x="1040" y="607" font-size="10" fill="#00ff00" text-anchor="middle" font-family="Liberation Sans" >0.8</text>
<text x="1057" y="607" font-size="10" fill="#00ff00" text-anchor="middle" font-family="Liberation Sans" >3.2</text>
<text x="843" y="619" font-size="10" fill="#00ff00" text-anchor="middle" font-family="Liberation Sans" >6</text>
<text x="853" y="619" font-size="10" fill="#00ff00" text-anchor="start" font-family="Liberation Sans" >GB5783-86</text>
<text x="910" y="619" font-size="8" fill="#00ff00" text-anchor="start" font-family="Liberation Sans" font-weight="bold" textLength="48" lengthAdjust="spacingAndGlyphs">螺栓M5X20-Zn.D</text>
<text x="968" y="619" font-size="10" fill="#00ff00" text-anchor="middle" font-family="Liberation Sans" >4</text>
<text x="1003" y="619" font-size="10" fill="#00ff00" text-anchor="middle" font-family="Liberation Sans" >45</text>
<text x="1040" y="619" font-size="10" fill="#00ff00" text-anchor="middle" font-family="Liberation Sans" >1.1</text>
<text x="1057" y="619" font-size="10" fill="#00ff00" text-anchor="middle" font-family="Liberation Sans" >4.4</text>
<text x="843" y="632" font-size="10" fill="#00ff00" text-anchor="middle" font-family="Liberation Sans" >5</text>
<text x="853" y="632" font-size="10" fill="#00ff00" text-anchor="start" font-family="Liberation Sans" >A02-6324</text>
<text x="910" y="632" font-size="8" fill="#00ff00" text-anchor="start" font-family="Liberation Sans" font-weight="bold" textLength="11" lengthAdjust="spacingAndGlyphs">电机</text>
<text x="968" y="632" font-size="10" fill="#00ff00" text-anchor="middle" font-family="Liberation Sans" >1</text>
<text x="1003" y="632" font-size="10" fill="#00ff00" text-anchor="middle" font-family="Liberation Sans" >Q235-A</text>
<text x="1040" y="632" font-size="10" fill="#00ff00" text-anchor="middle" font-family="Liberation Sans" >0.2</text>
<text x="1057" y="632" font-size="10" fill="#00ff00" text-anchor="middle" font-family="Liberation Sans" >0.2</text>
<text x="843" y="644" font-size="10" fill="#00ff00" text-anchor="middle" font-family="Liberation Sans" >4</text>
<text x="853" y="644" font-size="10" fill="#00ff00" text-anchor="start" font-family="Liberation Sans" >0-72</text>
<text x="910" y="644" font-size="8" fill="#00ff00" text-anchor="start" font-family="Liberation Sans" font-weight="bold" textLength="11" lengthAdjust="spacingAndGlyphs">支座</text>
<text x="968" y="644" font-size="10" fill="#00ff00" text-anchor="middle" font-family="Liberation Sans" >1</text>
<text x="1003" y="644" font-size="10" fill="#00ff00" text-anchor="middle" font-family="Liberation Sans" >Q235-A</text>
<text x="1040" y="644" font-size="10" fill="#00ff00" text-anchor="middle" font-family="Liberation Sans" >5</text>
<text x="1057" y="644" font-size="10" fill="#00ff00" text-anchor="middle" font-family="Liberation Sans" >5</text>
<text x="1090" y="644" font-size="8" fill="#00ff00" text-anchor="middle" font-family="Liberation Sans" font-weight="bold">借用</text>
<text x="843" y="656" font-size="10" fill="#00ff00" text-anchor="middle" font-family="Liberation Sans" >3</text>
<text x="853" y="656" font-size="10" fill="#00ff00" text-anchor="start" font-family="Liberation Sans" >GB5783-86</text>
<text x="910" y="656" font-size="8" fill="#00ff00" text-anchor="start" font-family="Liberation Sans" font-weight="bold" textLength="48" lengthAdjust="spacingAndGlyphs">螺栓M6X20-Zn.D</text>
<text x="968" y="656" font-size="10" fill="#00ff00" text-anchor="middle" font-family="Liberation Sans" >4</text>
<text x="1003" y="656" font-size="10" fill="#00ff00" text-anchor="middle" font-family="Liberation Sans" >Q235-A</text>
<text x="1040" y="656" font-size="10" fill="#00ff00" text-anchor="middle" font-family="Liberation Sans" >0.9</text>
<text x="1057" y="656" font-size="10" fill="#00ff00" text-anchor="middle" font-family="Liberation Sans" >3.6</text>
<text x="843" y="669" font-size="10" fill="#00ff00" text-anchor="middle" font-family="Liberation Sans" >2</text>
<text x="853" y="669" font-size="10" fill="#00ff00" text-anchor="start" font-family="Liberation Sans" >0-71</text>
<text x="910" y="669" font-size="8" fill="#00ff00" text-anchor="start" font-family="Liberation Sans" font-weight="bold" textLength="11" lengthAdjust="spacingAndGlyphs">支座</text>
<text x="968" y="669" font-size="10" fill="#00ff00" text-anchor="middle" font-family="Liberation Sans" >1</text>
<text x="1003" y="669" font-size="10" fill="#00ff00" text-anchor="middle" font-family="Liberation Sans" >45</text>
<text x="1040" y="669" font-size="10" fill="#00ff00" text-anchor="middle" font-family="Liberation Sans" >56</text>
<text x="1057" y="669" font-size="10" fill="#00ff00" text-anchor="middle" font-family="Liberation Sans" >56</text>
<text x="1090" y="669" font-size="8" fill="#00ff00" text-anchor="middle" font-family="Liberation Sans" font-weight="bold">借用</text>
<text x="843" y="681" font-size="10" fill="#00ff00" text-anchor="middle" font-family="Liberation Sans" >1</text>
<text x="853" y="681" font-size="10" fill="#00ff00" text-anchor="start" font-family="Liberation Sans" >GB5783-86</text>
<text x="910" y="681" font-size="8" fill="#00ff00" text-anchor="start" font-family="Liberation Sans" font-weight="bold" textLength="48" lengthAdjust="spacingAndGlyphs">螺栓M6X20-Zn.D</text>
<text x="968" y="681" font-size="10" fill="#00ff00" text-anchor="middle" font-family="Liberation Sans" >4</text>
<text x="1003" y="681" font-size="10" fill="#00ff00" text-anchor="middle" font-family="Liberation Sans" >45</text>
<text x="1040" y="681" font-size="10" fill="#00ff00" text-anchor="middle" font-family="Liberation Sans" >1</text>
<text x="1057" y="681" font-size="10" fill="#00ff00" text-anchor="middle" font-family="Liberation Sans" >4</text>
<text x="843" y="697" font-size="8" fill="#00ff00" text-anchor="middle" font-family="Liberation Sans" font-weight="bold">序号</text>
<text x="862" y="697" font-size="8" fill="#00ff00" text-anchor="middle" font-family="Liberation Sans" >代</text>
<text x="895" y="697" font-size="8" fill="#00ff00" text-anchor="middle" font-family="Liberation Sans" >号</text>
<text x="916" y="697" font-size="8" fill="#00ff00" text-anchor="middle" font-family="Liberation Sans" >名</text>
<text x="947" y="697" font-size="8" fill="#00ff00" text-anchor="middle" font-family="Liberation Sans" >称</text>
<text x="968" y="697" font-size="8" fill="#00ff00" text-anchor="middle" font-family="Liberation Sans" font-weight="bold">数量</text>
<text x="985" y="697" font-size="8" fill="#00ff00" text-anchor="middle" font-family="Liberation Sans" >材</text>
<text x="1020" y="697" font-size="8" fill="#00ff00" text-anchor="middle" font-family="Liberation Sans" >料</text>
<text x="1040" y="690" font-size="7" fill="#00ff00" text-anchor="middle" font-family="Liberation Sans" >单件</text>
<text x="1057" y="690" font-size="7" fill="#00ff00" text-anchor="middle" font-family="Liberation Sans" >总计</text>
<text x="1049" y="701" font-size="7" fill="#00ff00" text-anchor="middle" font-family="Liberation Sans" >重    量</text>
<text x="1073" y="697" font-size="8" fill="#00ff00" text-anchor="middle" font-family="Liberation Sans" >备</text>
<text x="1104" y="697" font-size="8" fill="#00ff00" text-anchor="middle" font-family="Liberation Sans" >注</text>
<line x1="834" y1="702.5" x2="1114" y2="702.5" stroke="#ffffff"/>
<line x1="834.5" y1="702" x2="834.5" y2="772" stroke="#ffffff"/>
<line x1="846.5" y1="702" x2="846.5" y2="741" stroke="#ffffff"/>
<line x1="857.5" y1="702" x2="857.5" y2="741" stroke="#ffffff"/>
<line x1="888.5" y1="702" x2="888.5" y2="741" stroke="#ffffff"/>
<line x1="911.5" y1="702" x2="911.5" y2="741" stroke="#ffffff"/>
<line x1="927.5" y1="702" x2="927.5" y2="772" stroke="#ffffff"/>
<line x1="1020.5" y1="702" x2="1020.5" y2="772" stroke="#ffffff"/>
<line x1="834" y1="709.5" x2="928" y2="709.5" stroke="#00ffff"/>
<line x1="834" y1="717.5" x2="928" y2="717.5" stroke="#00ffff"/>
<line x1="834" y1="725.5" x2="928" y2="725.5" stroke="#00ffff"/>
<line x1="834" y1="733.5" x2="928" y2="733.5" stroke="#ffffff"/>
<line x1="834" y1="740.5" x2="928" y2="740.5" stroke="#ffffff"/>
<line x1="857.5" y1="740" x2="857.5" y2="772" stroke="#ffffff"/>
<line x1="880.5" y1="740" x2="880.5" y2="772" stroke="#ffffff"/>
<line x1="904.5" y1="740" x2="904.5" y2="772" stroke="#ffffff"/>
<line x1="834" y1="748.5" x2="928" y2="748.5" stroke="#00ffff"/>
<line x1="834" y1="756.5" x2="928" y2="756.5" stroke="#00ffff"/>
<line x1="834" y1="764.5" x2="928" y2="764.5" stroke="#00ffff"/>
<line x1="927" y1="740.5" x2="1021" y2="740.5" stroke="#ffffff"/>
<line x1="927" y1="750.5" x2="1021" y2="750.5" stroke="#00ffff"/>
<line x1="927" y1="762.5" x2="1021" y2="762.5" stroke="#00ffff"/>
<line x1="938.5" y1="750" x2="938.5" y2="763" stroke="#00ffff"/>
<line x1="950.5" y1="750" x2="950.5" y2="763" stroke="#00ffff"/>
<line x1="962.5" y1="750" x2="962.5" y2="763" stroke="#00ffff"/>
<line x1="973.5" y1="740" x2="973.5" y2="772" stroke="#00ffff"/>
<line x1="997.5" y1="740" x2="997.5" y2="772" stroke="#00ffff"/>
<line x1="1020" y1="726.5" x2="1114" y2="726.5" stroke="#ffffff"/>
<line x1="1020" y1="748.5" x2="1114" y2="748.5" stroke="#ffffff"/>
<line x1="898.5" y1="771" x2="898.5" y2="788" stroke="#00ffff"/>
<text x="973" y="726" font-size="12" fill="#00ff00" text-anchor="middle" font-family="Liberation Sans" font-weight="bold">装配件</text>
<text x="1066" y="741" font-size="9" fill="#00ff00" text-anchor="middle" font-family="Liberation Sans" font-weight="bold">减速机构</text>
<text x="1066" y="763" font-size="11" fill="#00ff00" text-anchor="middle" font-family="Liberation Sans" >0-70</text>
<text x="985" y="761" font-size="7" fill="#00ff00" text-anchor="middle" font-family="Liberation Sans" >89.9</text>
<text x="1008" y="761" font-size="7" fill="#00ff00" text-anchor="middle" font-family="Liberation Sans" >1:2</text>
<text x="845" y="738" font-size="6" fill="#00ff00" text-anchor="middle" font-family="Liberation Sans" font-weight="bold">标记</text>
<text x="856" y="738" font-size="6" fill="#00ff00" text-anchor="middle" font-family="Liberation Sans" font-weight="bold">处数</text>
<text x="872" y="738" font-size="6" fill="#00ff00" text-anchor="middle" font-family="Liberation Sans" font-weight="bold">更改文件号</text>
<text x="897" y="738" font-size="6" fill="#00ff00" text-anchor="middle" font-family="Liberation Sans" font-weight="bold">签字</text>
<text x="919" y="738" font-size="6" fill="#00ff00" text-anchor="middle" font-family="Liberation Sans" font-weight="bold">日期</text>
<text x="848" y="747" font-size="6" fill="#00ff00" text-anchor="middle" font-family="Liberation Sans" font-weight="bold">设计</text>
<text x="884" y="747" font-size="6" fill="#00ff00" text-anchor="middle" font-family="Liberation Sans" font-weight="bold">标准化</text>
<text x="848" y="762" font-size="6" fill="#00ff00" text-anchor="middle" font-family="Liberation Sans" font-weight="bold">审核</text>
<text x="848" y="769" font-size="6" fill="#00ff00" text-anchor="middle" font-family="Liberation Sans" font-weight="bold">工艺</text>
<text x="888" y="769" font-size="6" fill="#00ff00" text-anchor="middle" font-family="Liberation Sans" font-weight="bold">日期</text>
<text x="950" y="748" font-size="6" fill="#00ff00" text-anchor="middle" font-family="Liberation Sans" font-weight="bold">阶段标记</text>
<text x="985" y="748" font-size="6" fill="#00ff00" text-anchor="middle" font-family="Liberation Sans" font-weight="bold">重量</text>
<text x="1008" y="748" font-size="6" fill="#00ff00" text-anchor="middle" font-family="Liberation Sans" font-weight="bold">比例</text>
<text x="938" y="769" font-size="6" fill="#00ff00" text-anchor="middle" font-family="Liberation Sans" font-weight="bold">共</text>
<text x="962" y="769" font-size="6" fill="#00ff00" text-anchor="middle" font-family="Liberation Sans" font-weight="bold">页</text>
<text x="985" y="769" font-size="6" fill="#00ff00" text-anchor="middle" font-family="Liberation Sans" font-weight="bold">第</text>
<text x="1008" y="769" font-size="6" fill="#00ff00" text-anchor="middle" font-family="Liberation Sans" font-weight="bold">页</text>
<line x1="76.5" y1="722" x2="76.5" y2="773" stroke="#ffffff"/>
<line x1="76" y1="772.5" x2="128" y2="772.5" stroke="#ffffff"/>
<rect x="72.5" y="768.5" width="8" height="8" fill="none" stroke="#ffffff"/>
<polyline points="80.5,707.5 84.5,713.5 89.5,707.5" fill="none" stroke="#ffffff"/>
<line x1="84.5" y1="713" x2="84.5" y2="720" stroke="#ffffff"/>
<line x1="131.5" y1="759.5" x2="143.5" y2="771.5" stroke="#ffffff"/>
<line x1="143.5" y1="759.5" x2="131.5" y2="771.5" stroke="#ffffff"/>
<text x="62" y="151" font-size="12" fill="#e8e8e8" font-family="Liberation Sans" letter-spacing="0.5">[−][俯视][二维线框]</text>
<line x1="1172" y1="775.5" x2="1266" y2="775.5" stroke="#ffffff"/>
<line x1="1218.5" y1="729" x2="1218.5" y2="792" stroke="#ffffff"/>
<rect x="1215.5" y="772.5" width="7" height="7" fill="none" stroke="#ffffff"/>
</g></svg>
</body></html>
